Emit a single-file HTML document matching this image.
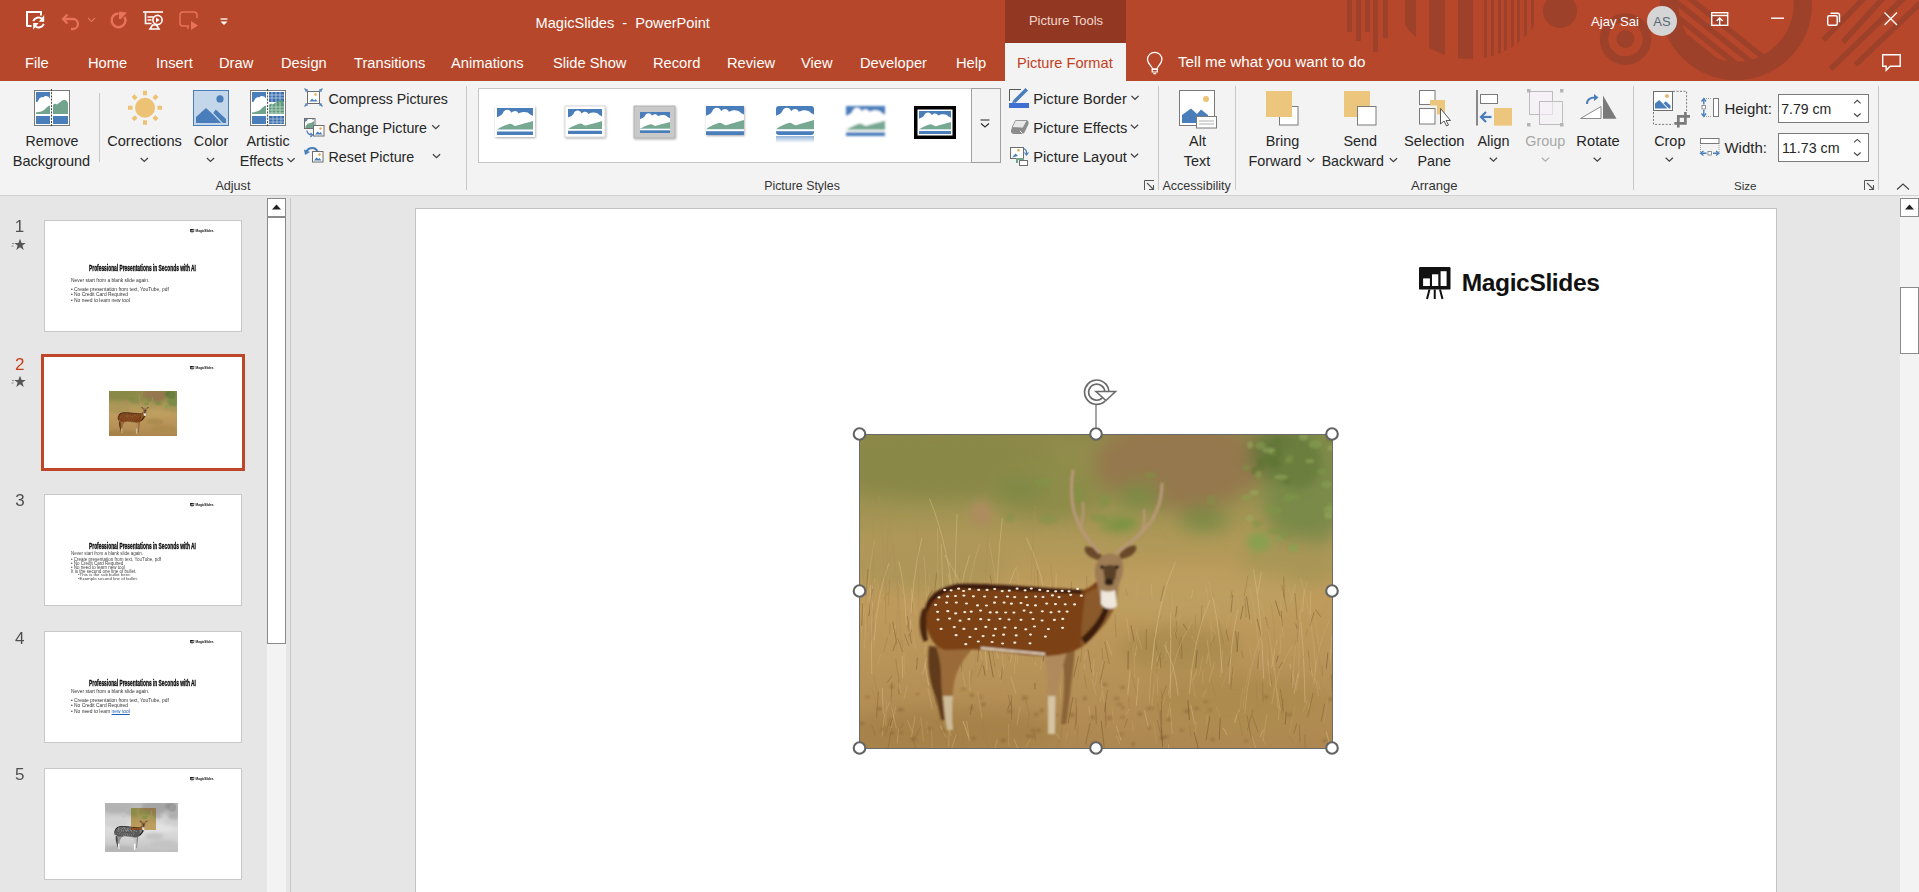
<!DOCTYPE html>
<html><head><meta charset="utf-8"><style>*{margin:0;padding:0;box-sizing:border-box}
html,body{width:1919px;height:892px;overflow:hidden;background:#e6e6e6;font-family:"Liberation Sans",sans-serif;color:#262626}
.a{position:absolute}
.t{line-height:1;white-space:nowrap}
</style></head><body>
<div class="a" style="left:0;top:0;width:1919px;height:81px;background:#b7472a;overflow:hidden">

<svg class="a" style="left:0;top:0" width="1919" height="81">
<g fill="#9d412b">
<rect x="1347" y="0" width="5" height="32"/>
<rect x="1356" y="0" width="5" height="41"/>
<rect x="1365" y="0" width="5" height="32"/>
<rect x="1373" y="0" width="5" height="52"/>
<rect x="1383" y="0" width="5" height="38"/>
<clipPath id="c1"><circle cx="1470" cy="-20" r="79"/></clipPath>
<g clip-path="url(#c1)">
<rect x="1405" y="0" width="11" height="81"/>
<rect x="1429" y="0" width="16" height="81"/>
<rect x="1458" y="0" width="15" height="81"/>
<rect x="1484" y="0" width="3" height="81"/>
<rect x="1491" y="0" width="3" height="81"/>
<rect x="1498" y="0" width="3" height="81"/>
<rect x="1504" y="0" width="3" height="81"/>
<rect x="1511" y="0" width="3" height="81"/>
<rect x="1517" y="0" width="3" height="81"/>
<rect x="1524" y="0" width="3" height="81"/>
<rect x="1531" y="0" width="3" height="81"/>
</g>
<circle cx="1560" cy="11" r="17"/>
<circle cx="1625.5" cy="39" r="21.5" fill="none" stroke="#9d412b" stroke-width="8.5"/>
<circle cx="1625.5" cy="39" r="9"/>
<circle cx="1736" cy="4" r="66.8" fill="none" stroke="#9d412b" stroke-width="18.4"/>
<clipPath id="c2"><circle cx="1736" cy="4" r="58"/></clipPath>
<g clip-path="url(#c2)" stroke="#9d412b" stroke-width="5.5">
<line x1="1640" y1="-41.2" x2="1810" y2="94.8"/><line x1="1640" y1="-27.0" x2="1810" y2="109.0"/><line x1="1640" y1="-13.0" x2="1810" y2="123.0"/><line x1="1640" y1="0.0" x2="1810" y2="136.0"/>
</g>
<g stroke="#9d412b" stroke-width="5.5">
<line x1="1823.5" y1="39.9" x2="1870" y2="-8.0"/><line x1="1843" y1="42.2" x2="1890" y2="-9.5"/><line x1="1830.4" y1="69.3" x2="1930" y2="-27.3"/><line x1="1855.5" y1="64.7" x2="1930" y2="-6.1"/>
</g>
</g>
</svg>
<svg class="a" style="left:0;top:0" width="240" height="43">
<path d="M27 26.5V12H41V15.5M27 26H31.5" fill="none" stroke="#fff" stroke-width="2"/>
<g fill="none" stroke="#fff" stroke-width="1.9">
<path d="M33.2 21.2A5.6 5.6 0 0 1 42.2 19"/><path d="M43.8 23.8A5.6 5.6 0 0 1 34.8 26"/>
</g>
<path d="M44.2 15V21.8H38.8z M33.2 29.8V23H38.6z" fill="#fff"/>
<g fill="none" stroke="#e8725a" stroke-width="2.3">
<path d="M63 19h10a5 5 0 0 1 0 10h-2"/><path d="M67.5 14.5L63 19l4.5 4.5"/>
</g>
<path d="M88 18l3.5 3.5L95 18" fill="none" stroke="#e8725a" stroke-width="1.2"/>
<path d="M118.5 13.4A6.9 6.9 0 1 0 124.5 16.8" fill="none" stroke="#e8725a" stroke-width="2.5"/>
<path d="M119.2 11.6L127 12.6L121.3 18.6z M119 12.5H121.5V19H119z" fill="#e8725a"/>
<g fill="none" stroke="#fff" stroke-width="1.6">
<path d="M143 12h20"/><path d="M145.5 12.5v11h6"/><path d="M147.5 17h6M147.5 20h4"/>
<circle cx="157.5" cy="20" r="4.6"/><path d="M150 29l2.5-4h4l2.5 4z"/>
</g>
<path d="M156 17.5v5l3.5-2.5z" fill="#fff"/>
<g fill="none" stroke="#e8725a" stroke-width="1.5">
<path d="M189 26h-6a3 3 0 0 1-3-3v-8a3 3 0 0 1 3-3h11a3 3 0 0 1 3 3v3"/><path d="M188 26v3"/>
</g>
<path d="M191 21v9l7-4.5z" fill="#e8725a"/>
<path d="M220.5 19h7" stroke="#fff" stroke-width="1.3"/>
<path d="M220.5 21.5h7l-3.5 3.5z" fill="#fff"/>
</svg>
<svg class="a" style="left:1700px;top:0" width="219" height="81">
<g fill="none" stroke="#fff" stroke-width="1.4">
<rect x="11.7" y="12.7" width="16" height="12.6"/>
<path d="M12 15.5h15.5"/><path d="M19.7 25v-7M16.7 21l3-3 3 3"/>
<path d="M71 18.2h13"/>
<rect x="127.7" y="15.7" width="9.5" height="9.5" rx="1.5"/><path d="M130.5 13.3h7a2 2 0 0 1 2 2v7"/>
<path d="M184.5 12.5l12.5 12.5M197 12.5l-12.5 12.5"/>
<path d="M182.7 54.7h17.5v11.5h-10l-4 4v-4h-3.5z"/>
</g>
</svg>
<svg class="a" style="left:1140.5px;top:45px" width="30" height="38">
<path d="M11.5 24C11.5 21.5 6.5 19 6.5 14.5A7.2 7.2 0 0 1 20.9 14.5C20.9 19 16 21.5 16 24z" fill="none" stroke="#fff" stroke-width="1.3"/>
<path d="M11.2 24.5H16.3V27H11.2z" fill="none" stroke="#fff" stroke-width="1.2"/>
<path d="M12.3 28.6H15.2" stroke="#fff" stroke-width="1.3"/>
</svg>

<div class="a" style="left:1005px;top:0;width:121px;height:43px;background:#923822"></div>
<div class="a" style="left:1005px;top:43px;width:121px;height:38px;background:#f3f3f3"></div>
<div class="a t" style="left:916.00px;top:14px;width:300px;text-align:center;font-size:13px;color:#f1d5cc;">Picture Tools</div>
<div class="a t" style="left:535.50px;top:16px;font-size:14.6px;color:#fff;">MagicSlides&nbsp; -&nbsp; PowerPoint</div>
<div class="a t" style="left:25.00px;top:56px;font-size:14.7px;color:#fff;">File</div>
<div class="a t" style="left:88.00px;top:56px;font-size:14.7px;color:#fff;">Home</div>
<div class="a t" style="left:156.00px;top:56px;font-size:14.7px;color:#fff;">Insert</div>
<div class="a t" style="left:219.00px;top:56px;font-size:14.7px;color:#fff;">Draw</div>
<div class="a t" style="left:281.00px;top:56px;font-size:14.7px;color:#fff;">Design</div>
<div class="a t" style="left:354.00px;top:56px;font-size:14.7px;color:#fff;">Transitions</div>
<div class="a t" style="left:451.00px;top:56px;font-size:14.7px;color:#fff;">Animations</div>
<div class="a t" style="left:553.00px;top:56px;font-size:14.7px;color:#fff;">Slide Show</div>
<div class="a t" style="left:653.00px;top:56px;font-size:14.7px;color:#fff;">Record</div>
<div class="a t" style="left:727.00px;top:56px;font-size:14.7px;color:#fff;">Review</div>
<div class="a t" style="left:801.00px;top:56px;font-size:14.7px;color:#fff;">View</div>
<div class="a t" style="left:860.00px;top:56px;font-size:14.7px;color:#fff;">Developer</div>
<div class="a t" style="left:956.00px;top:56px;font-size:14.7px;color:#fff;">Help</div>
<div class="a t" style="left:1017.00px;top:56px;font-size:14.6px;color:#c43e1c;">Picture Format</div>
<div class="a t" style="left:1178.00px;top:54px;font-size:15.2px;color:#fff;">Tell me what you want to do</div>
<div class="a t" style="left:1591.00px;top:15px;font-size:13.1px;color:#fff;">Ajay Sai</div>
<div class="a" style="left:1647px;top:6px;width:30px;height:30px;border-radius:50%;background:#d5d5d5"></div>
<div class="a t" style="left:1512.00px;top:15px;width:300px;text-align:center;font-size:13px;color:#5b6675;">AS</div>
</div>
<div class="a" style="left:0;top:81px;width:1919px;height:114px;background:#f3f3f3"></div>
<div class="a" style="left:0;top:195px;width:1919px;height:1px;background:#d2d2d2"></div>
<div class="a t" style="left:-98.00px;top:134px;width:300px;text-align:center;font-size:14.2px;color:#262626;">Remove</div>
<div class="a t" style="left:-98.50px;top:154px;width:300px;text-align:center;font-size:14.5px;color:#262626;">Background</div>
<div class="a t" style="left:-5.50px;top:134px;width:300px;text-align:center;font-size:14.6px;color:#262626;">Corrections</div>
<div class="a t" style="left:61.00px;top:134px;width:300px;text-align:center;font-size:14.4px;color:#262626;">Color</div>
<div class="a t" style="left:118.00px;top:134px;width:300px;text-align:center;font-size:14.4px;color:#262626;">Artistic</div>
<div class="a t" style="left:111.50px;top:154px;width:300px;text-align:center;font-size:14.4px;color:#262626;">Effects</div>
<div class="a t" style="left:328.50px;top:92px;font-size:14.15px;color:#262626;">Compress Pictures</div>
<div class="a t" style="left:328.50px;top:121px;font-size:14.3px;color:#262626;">Change Picture</div>
<div class="a t" style="left:328.50px;top:150px;font-size:14.3px;color:#262626;">Reset Picture</div>
<div class="a t" style="left:1033.30px;top:92px;font-size:14.65px;color:#262626;">Picture Border</div>
<div class="a t" style="left:1033.30px;top:121px;font-size:14.65px;color:#262626;">Picture Effects</div>
<div class="a t" style="left:1033.30px;top:150px;font-size:14.65px;color:#262626;">Picture Layout</div>
<div class="a t" style="left:1047.50px;top:134px;width:300px;text-align:center;font-size:14.4px;color:#262626;">Alt</div>
<div class="a t" style="left:1047.00px;top:154px;width:300px;text-align:center;font-size:14.4px;color:#262626;">Text</div>
<div class="a t" style="left:1132.50px;top:134px;width:300px;text-align:center;font-size:14.4px;color:#262626;">Bring</div>
<div class="a t" style="left:1124.80px;top:154px;width:300px;text-align:center;font-size:14.4px;color:#262626;">Forward</div>
<div class="a t" style="left:1210.20px;top:134px;width:300px;text-align:center;font-size:14.4px;color:#262626;">Send</div>
<div class="a t" style="left:1202.80px;top:154px;width:300px;text-align:center;font-size:14.2px;color:#262626;">Backward</div>
<div class="a t" style="left:1284.30px;top:134px;width:300px;text-align:center;font-size:14.7px;color:#262626;">Selection</div>
<div class="a t" style="left:1284.30px;top:154px;width:300px;text-align:center;font-size:14.4px;color:#262626;">Pane</div>
<div class="a t" style="left:1343.50px;top:134px;width:300px;text-align:center;font-size:14.4px;color:#262626;">Align</div>
<div class="a t" style="left:1395.30px;top:134px;width:300px;text-align:center;font-size:14.4px;color:#a8a8a8;">Group</div>
<div class="a t" style="left:1448.00px;top:134px;width:300px;text-align:center;font-size:14.7px;color:#262626;">Rotate</div>
<div class="a t" style="left:1519.80px;top:134px;width:300px;text-align:center;font-size:14.4px;color:#262626;">Crop</div>
<div class="a t" style="left:1724.40px;top:101px;font-size:15px;color:#262626;">Height:</div>
<div class="a t" style="left:1724.40px;top:140px;font-size:15px;color:#262626;">Width:</div>
<div class="a t" style="left:82.90px;top:180px;width:300px;text-align:center;font-size:12.6px;color:#333;">Adjust</div>
<div class="a t" style="left:652.00px;top:180px;width:300px;text-align:center;font-size:12.4px;color:#333;">Picture Styles</div>
<div class="a t" style="left:1046.60px;top:180px;width:300px;text-align:center;font-size:12.55px;color:#333;">Accessibility</div>
<div class="a t" style="left:1284.30px;top:179px;width:300px;text-align:center;font-size:13.1px;color:#333;">Arrange</div>
<div class="a t" style="left:1595.20px;top:180px;width:300px;text-align:center;font-size:11.6px;color:#333;">Size</div>
<div class="a" style="left:1778px;top:94px;width:91px;height:29px;background:#fff;border:1px solid #7a7a7a"></div>
<div class="a" style="left:1778px;top:133px;width:91px;height:29px;background:#fff;border:1px solid #7a7a7a"></div>
<div class="a t" style="left:1781.30px;top:102px;font-size:14.05px;color:#262626;">7.79 cm</div>
<div class="a t" style="left:1782.00px;top:141px;font-size:14.25px;color:#262626;">11.73 cm</div>
<svg class="a" style="left:0;top:0" width="1919" height="200"><defs>
<filter id="sh" x="-20%" y="-20%" width="150%" height="150%"><feDropShadow dx="0.6" dy="1" stdDeviation="0.8" flood-color="#000" flood-opacity=".35"/></filter>
<filter id="soft" x="-20%" y="-20%" width="140%" height="140%"><feGaussianBlur stdDeviation="1.1"/></filter>
<clipPath id="rr5"><rect x="776" y="106" width="38" height="29" rx="3"/></clipPath>
<linearGradient id="refl" x1="0" y1="0" x2="0" y2="1"><stop offset="0" stop-color="#8fb1d8"/><stop offset="1" stop-color="#fff"/></linearGradient>
</defs><path d="M99.5 93V162" stroke="#c8c8c8" stroke-width="1"/><path d="M466.5 86V190" stroke="#c8c8c8" stroke-width="1"/><path d="M1158.5 86V190" stroke="#c8c8c8" stroke-width="1"/><path d="M1235.5 86V190" stroke="#c8c8c8" stroke-width="1"/><path d="M1633.5 86V190" stroke="#c8c8c8" stroke-width="1"/><path d="M1878.5 86V190" stroke="#c8c8c8" stroke-width="1"/><path d="M140.70000000000002 158.0L144.3 161.39999999999998L147.9 158.0" fill="none" stroke="#444" stroke-width="1.3"/><path d="M206.9 158.0L210.5 161.39999999999998L214.1 158.0" fill="none" stroke="#444" stroke-width="1.3"/><path d="M287.4 158.3L291 161.7L294.6 158.3" fill="none" stroke="#444" stroke-width="1.3"/><path d="M432.2 125.3L435.8 128.7L439.40000000000003 125.3" fill="none" stroke="#444" stroke-width="1.3"/><path d="M432.9 154.3L436.5 157.7L440.1 154.3" fill="none" stroke="#444" stroke-width="1.3"/><path d="M1131.4 95.89999999999999L1135 99.3L1138.6 95.89999999999999" fill="none" stroke="#444" stroke-width="1.3"/><path d="M1130.9 124.8L1134.5 128.2L1138.1 124.8" fill="none" stroke="#444" stroke-width="1.3"/><path d="M1130.9 153.8L1134.5 157.2L1138.1 153.8" fill="none" stroke="#444" stroke-width="1.3"/><path d="M1307.1000000000001 158.3L1310.7 161.7L1314.3 158.3" fill="none" stroke="#444" stroke-width="1.3"/><path d="M1389.8000000000002 158.3L1393.4 161.7L1397.0 158.3" fill="none" stroke="#444" stroke-width="1.3"/><path d="M1489.8000000000002 157.70000000000002L1493.4 161.1L1497.0 157.70000000000002" fill="none" stroke="#444" stroke-width="1.3"/><path d="M1541.8000000000002 157.70000000000002L1545.4 161.1L1549.0 157.70000000000002" fill="none" stroke="#b0b0b0" stroke-width="1.3"/><path d="M1593.7 157.70000000000002L1597.3 161.1L1600.8999999999999 157.70000000000002" fill="none" stroke="#444" stroke-width="1.3"/><path d="M1665.7 157.70000000000002L1669.3 161.1L1672.8999999999999 157.70000000000002" fill="none" stroke="#444" stroke-width="1.3"/><path d="M1854 103.3L1857.3 100.3L1860.6 103.3" fill="none" stroke="#444" stroke-width="1.1"/><path d="M1854 113.5L1857.3 116.5L1860.6 113.5" fill="none" stroke="#444" stroke-width="1.1"/><path d="M1854 142.4L1857.3 139.4L1860.6 142.4" fill="none" stroke="#444" stroke-width="1.1"/><path d="M1854 152.5L1857.3 155.5L1860.6 152.5" fill="none" stroke="#444" stroke-width="1.1"/><path d="M1144.5 190V180.5H1154" fill="none" stroke="#555" stroke-width="1"/><path d="M1147 183L1153.5 189.5M1153.5 185V189.5H1149" fill="none" stroke="#555" stroke-width="1.1"/><path d="M1864.5 190V180.5H1874" fill="none" stroke="#555" stroke-width="1"/><path d="M1867 183L1873.5 189.5M1873.5 185V189.5H1869" fill="none" stroke="#555" stroke-width="1.1"/><path d="M1897 189.5L1903 184L1909 189.5" fill="none" stroke="#444" stroke-width="1.2"/><rect x="34.5" y="90.5" width="35" height="35" fill="#fff" stroke="#7a7a7a"/>
<rect x="36" y="92" width="14" height="10" fill="#4a7ebb"/>
<path d="M36 102.5c1.5-.5 2.5-2 3-3.5 1-1.5 2.5-2 4-1.5 1-1.5 3-2 5-1 1 .5 2 1.5 2 3V92v16H36z" fill="#fff"/>
<path d="M36 114V112.5c3 -.5 6-1 8-2.5 2-1.5 3-4 6-4.5V114z" fill="#72a48d"/>
<rect x="36" y="116" width="14" height="8" fill="#4a7ebb"/>
<path d="M53 114V105c1.5-2 3-1.5 4-.5 1.5-1.5 3-2 4-3 2-2 5-2 6.5 0.5 .5 1 .5 2 .5 3V114z" fill="#72a48d"/>
<rect x="53" y="116" width="15" height="8" fill="#4a7ebb"/>
<path d="M51.5 89V127" stroke="#444" stroke-width="1" stroke-dasharray="2 1.2"/><circle cx="145" cy="107.7" r="10" fill="#edc275"/><path d="M145.00 95.20L145.00 90.70M153.84 98.86L157.02 95.68M157.50 107.70L162.00 107.70M153.84 116.54L157.02 119.72M145.00 120.20L145.00 124.70M136.16 116.54L132.98 119.72M132.50 107.70L128.00 107.70M136.16 98.86L132.98 95.68" stroke="#edc275" stroke-width="4"/><rect x="193.5" y="90.5" width="35" height="35" fill="#c4d6ea" stroke="#4a7ebb"/>
<circle cx="220" cy="98.9" r="3.6" fill="#4a7ebb"/>
<path d="M196 123V117L206 108L212.5 114L215.8 109.5L226 119V123z" fill="#4a7ebb"/>
<path d="M212.5 113L222.5 123.5" stroke="#c4d6ea" stroke-width="1.2"/><rect x="250.5" y="90.5" width="35" height="35" fill="#fff" stroke="#7a7a7a"/>
<rect x="252" y="92" width="14" height="10" fill="#4a7ebb"/>
<path d="M252 102.5c1.5-.5 2.5-2 3-3.5 1-1.5 2.5-2 4-1.5 1-1.5 3-2 5-1 1 .5 2 1.5 2 3V92v16H252z" fill="#fff"/>
<path d="M252 114V112.5c3 -.5 6-1 8-2.5 2-1.5 3-4 6-4.5V114z" fill="#72a48d"/>
<rect x="252" y="116" width="14" height="8" fill="#4a7ebb"/>
<rect x="269" y="92" width="15" height="10" fill="#3d6fae"/>
<path d="M269 95h15M269 98h15M272 92v10M276 92v10M280 92v10" stroke="#bcd0e6" stroke-width=".8"/>
<path d="M269 114V105c1.5-2 3-1.5 4-.5 1.5-1.5 3-2 4-3 2-2 5-2 6.5 0.5 .5 1 .5 2 .5 3V114z" fill="#5f9a7e"/>
<path d="M269 107h15M269 110h15M269 113h15M272 103v11M276 102v12M280 102v12" stroke="#cfe3d6" stroke-width=".7"/>
<rect x="269" y="116" width="15" height="8" fill="#3d6fae"/>
<path d="M269 119h15M269 122h15M273 116v8M277 116v8M281 116v8" stroke="#bcd0e6" stroke-width=".7"/>
<path d="M267.6 89V127" stroke="#444" stroke-width="1" stroke-dasharray="2 1.2"/><rect x="307.5" y="91.5" width="12" height="12" fill="#fff" stroke="#6d6d6d"/>
<circle cx="315.5" cy="94.5" r="1.3" fill="#e9a84c"/>
<path d="M309.5 101.5L312 98.5L314 100.5L315.5 99L317.5 101.5z" fill="#4a7ebb"/>
<g stroke="#4a7ebb" stroke-width="1.1" fill="none"><path d="M304.5 88.5L307 91M304.5 106.5L307 104M322.5 88.5L320 91M322.5 106.5L320 104"/>
<path d="M305 91h2v-2M305 104h2v2M322 91h-2v-2M322 104h-2v2"/></g><rect x="304.5" y="118.5" width="10.5" height="10" fill="#fff" stroke="#6d6d6d"/>
<path d="M305.5 126L308 123.5L311 123L314 121V128h-8.5z" fill="#72a48d"/>
<path d="M305.5 121.5V119.5h2M313.5 119.5h-1" stroke="#4a7ebb" stroke-width="1"/>
<rect x="313.5" y="125.5" width="10.5" height="10.5" fill="#fff" stroke="#6d6d6d"/>
<circle cx="320.5" cy="128.5" r="1.2" fill="#e9a84c"/>
<path d="M315 134.5L317.5 131.5L319.5 133L320.5 132L322.5 134.5z" fill="#4a7ebb"/>
<path d="M307 130.5c0 3 2 4 4.5 4.5" fill="none" stroke="#4a7ebb" stroke-width="1.3"/><path d="M310.5 133L312.5 135L310.5 137" fill="none" stroke="#4a7ebb" stroke-width="1.2"/><rect x="312.5" y="151.5" width="10.5" height="10.5" fill="#fff" stroke="#6d6d6d"/>
<circle cx="319.5" cy="154.5" r="1.3" fill="#e9a84c"/>
<path d="M314 160.5L316.5 157.5L318.5 159L319.5 158L321.5 160.5z" fill="#4a7ebb"/>
<path d="M306 152.5c1-3 3.5-4.5 6.5-4.5 2.5 0 4 1.5 5 3" fill="none" stroke="#4a7ebb" stroke-width="2"/>
<path d="M304 149.5L305 155L310 152z" fill="#4a7ebb"/><rect x="478.5" y="88.5" width="493" height="74" fill="#fff" stroke="#c6c6c6"/><rect x="971.5" y="88.5" width="29" height="74" fill="#f3f3f3" stroke="#a0a0a0"/><path d="M980.5 120H989.5" stroke="#333" stroke-width="1.1"/><path d="M981 123.5L985 127L989 123.5" fill="none" stroke="#333" stroke-width="1.3"/><rect x="495" y="106" width="40" height="31" fill="#fff" filter="url(#sh)"/><rect x="497" y="108" width="36" height="27" fill="#4a7ebb"/><path d="M497.00 117.18C499.16 116.10 501.32 115.56 502.76 113.40C504.20 108.54 509.96 108.54 511.40 112.86C513.56 110.16 517.16 110.16 518.60 113.40C522.20 111.24 527.96 111.24 530.12 114.48C531.56 115.02 532.28 115.56 533.00 116.10V129.60H497.00z" fill="#fff"/><path d="M497.00 129.60C500.60 126.90 506.00 124.74 509.96 123.66C512.12 123.66 514.28 126.36 516.08 125.82C522.20 123.66 527.60 122.85 533.00 120.96V129.60z" fill="#76a892"/><rect x="497" y="129.60" width="36" height="1.89" fill="#fff"/><rect x="565" y="106" width="40" height="31" fill="#fff" stroke="#d0d0d0" stroke-width=".8" filter="url(#sh)"/><rect x="568" y="109" width="34" height="25" fill="#4a7ebb"/><path d="M568.00 117.50C570.04 116.50 572.08 116.00 573.44 114.00C574.80 109.50 580.24 109.50 581.60 113.50C583.64 111.00 587.04 111.00 588.40 114.00C591.80 112.00 597.24 112.00 599.28 115.00C600.64 115.50 601.32 116.00 602.00 116.50V129.00H568.00z" fill="#fff"/><path d="M568.00 129.00C571.40 126.50 576.50 124.50 580.24 123.50C582.28 123.50 584.32 126.00 586.02 125.50C591.80 123.50 596.90 122.75 602.00 121.00V129.00z" fill="#76a892"/><rect x="568" y="129.00" width="34" height="1.75" fill="#fff"/><rect x="634" y="106" width="41" height="32" fill="#c9c9c9" stroke="#aaa" stroke-width=".8" filter="url(#sh)"/><rect x="640" y="112" width="30" height="21" fill="#4a7ebb"/><path d="M640.00 119.14C641.80 118.30 643.60 117.88 644.80 116.20C646.00 112.42 650.80 112.42 652.00 115.78C653.80 113.68 656.80 113.68 658.00 116.20C661.00 114.52 665.80 114.52 667.60 117.04C668.80 117.46 669.40 117.88 670.00 118.30V128.80H640.00z" fill="#fff"/><path d="M640.00 128.80C643.00 126.70 647.50 125.02 650.80 124.18C652.60 124.18 654.40 126.28 655.90 125.86C661.00 124.18 665.50 123.55 670.00 122.08V128.80z" fill="#76a892"/><rect x="640" y="128.80" width="30" height="1.47" fill="#fff"/><g filter="url(#sh)"><rect x="706" y="106" width="38" height="29" fill="#4a7ebb"/><path d="M706.00 115.86C708.28 114.70 710.56 114.12 712.08 111.80C713.60 106.58 719.68 106.58 721.20 111.22C723.48 108.32 727.28 108.32 728.80 111.80C732.60 109.48 738.68 109.48 740.96 112.96C742.48 113.54 743.24 114.12 744.00 114.70V129.20H706.00z" fill="#fff"/><path d="M706.00 129.20C709.80 126.30 715.50 123.98 719.68 122.82C721.96 122.82 724.24 125.72 726.14 125.14C732.60 122.82 738.30 121.95 744.00 119.92V129.20z" fill="#76a892"/><rect x="706" y="129.20" width="38" height="2.03" fill="#fff"/></g><g clip-path="url(#rr5)"><rect x="776" y="106" width="38" height="29" fill="#4a7ebb"/><path d="M776.00 115.86C778.28 114.70 780.56 114.12 782.08 111.80C783.60 106.58 789.68 106.58 791.20 111.22C793.48 108.32 797.28 108.32 798.80 111.80C802.60 109.48 808.68 109.48 810.96 112.96C812.48 113.54 813.24 114.12 814.00 114.70V129.20H776.00z" fill="#fff"/><path d="M776.00 129.20C779.80 126.30 785.50 123.98 789.68 122.82C791.96 122.82 794.24 125.72 796.14 125.14C802.60 122.82 808.30 121.95 814.00 119.92V129.20z" fill="#76a892"/><rect x="776" y="129.20" width="38" height="2.03" fill="#fff"/></g><rect x="776" y="136" width="38" height="7" fill="url(#refl)"/><g filter="url(#soft)"><rect x="846" y="106" width="39" height="30" fill="#4a7ebb"/><path d="M846.00 116.20C848.34 115.00 850.68 114.40 852.24 112.00C853.80 106.60 860.04 106.60 861.60 111.40C863.94 108.40 867.84 108.40 869.40 112.00C873.30 109.60 879.54 109.60 881.88 113.20C883.44 113.80 884.22 114.40 885.00 115.00V130.00H846.00z" fill="#fff"/><path d="M846.00 130.00C849.90 127.00 855.75 124.60 860.04 123.40C862.38 123.40 864.72 126.40 866.67 125.80C873.30 123.40 879.15 122.50 885.00 120.40V130.00z" fill="#76a892"/><rect x="846" y="130.00" width="39" height="2.10" fill="#fff"/></g><rect x="914" y="106" width="42" height="33" fill="#000"/><rect x="917.5" y="109.5" width="35" height="26" fill="#fff"/><rect x="919" y="111" width="32" height="23" fill="#4a7ebb"/><path d="M919.00 118.82C920.92 117.90 922.84 117.44 924.12 115.60C925.40 111.46 930.52 111.46 931.80 115.14C933.72 112.84 936.92 112.84 938.20 115.60C941.40 113.76 946.52 113.76 948.44 116.52C949.72 116.98 950.36 117.44 951.00 117.90V129.40H919.00z" fill="#fff"/><path d="M919.00 129.40C922.20 127.10 927.00 125.26 930.52 124.34C932.44 124.34 934.36 126.64 935.96 126.18C941.40 124.34 946.20 123.65 951.00 122.04V129.40z" fill="#76a892"/><rect x="919" y="129.40" width="32" height="1.61" fill="#fff"/><path d="M1009.5 101V89.5H1021" fill="none" stroke="#555" stroke-width="1"/>
<path d="M1013 100.5L1025.5 88L1028 90.5L1015.5 103z" fill="#4a7ebb"/>
<path d="M1013 100.5L1012 103.5L1015 102.5z" fill="#4a7ebb"/>
<rect x="1009" y="103" width="20" height="5" fill="#3f6fd1"/><path d="M1012 128L1016 120.5H1027.5C1028.5 121 1028.8 122.5 1028.5 124L1024.5 132.5C1023.5 134 1022.5 134 1021 134H1014C1011 134 1010 131 1012 128z" fill="#8c8c8c"/>
<path d="M1012 127.5L1015.5 120.5H1027L1023 128z" fill="#e8e8e8" stroke="#8c8c8c" stroke-width=".8"/>
<path d="M1020 131L1022.5 133.5" stroke="#fff" stroke-width="1"/><rect x="1010.5" y="147.5" width="13" height="11" fill="#fff" stroke="#6d6d6d"/>
<circle cx="1018.5" cy="150.3" r="1.3" fill="#e9a84c"/>
<path d="M1012 157.5L1015.5 153.5L1018 156z" fill="#4a7ebb"/>
<path d="M1016 158h8v2h-8z" fill="#72a48d"/><path d="M1017 160v3" stroke="#72a48d" stroke-width="2"/>
<rect x="1019.5" y="160.5" width="8" height="5" fill="#fff" stroke="#6d6d6d"/>
<path d="M1023.5 148.5c2.5 1 3.5 3 3 5.5" fill="none" stroke="#4a7ebb" stroke-width="1.3"/><path d="M1024.5 152.5L1026.5 155L1028.5 152.5" fill="none" stroke="#4a7ebb" stroke-width="1.2"/><rect x="1179.5" y="90.5" width="35" height="35" fill="#fff" stroke="#7a7a7a"/>
<circle cx="1206" cy="99" r="3" fill="#edc275"/>
<path d="M1182 123V115L1191 108.5L1197 114L1201 109.5L1208 115V123z" fill="#4a7ebb"/>
<rect x="1196.5" y="116.5" width="20" height="11.5" fill="#fff" stroke="#7a7a7a"/>
<path d="M1199 121H1214M1199 124H1214" stroke="#9a9a9a" stroke-width=".8"/><rect x="1279.5" y="106.5" width="18.5" height="18.5" fill="#fff" stroke="#7a7a7a"/>
<rect x="1266" y="91" width="26" height="26" fill="#edc67d"/><rect x="1344" y="91" width="26" height="26" fill="#edc67d"/>
<rect x="1357.5" y="106.5" width="18.5" height="18.5" fill="#fff" stroke="#7a7a7a"/><rect x="1419.5" y="90.5" width="15.5" height="14" fill="#fff" stroke="#7a7a7a"/>
<rect x="1419.5" y="108.5" width="15.5" height="15.5" fill="#fff" stroke="#7a7a7a"/>
<rect x="1430" y="100" width="15" height="5.5" fill="#edc67d"/>
<rect x="1437" y="100" width="8" height="14.5" fill="#edc67d"/>
<path d="M1440.5 108.5V124L1444 121L1446.5 126L1448.5 125L1446 120.5H1450.5z" fill="#fff" stroke="#555" stroke-width="1"/><path d="M1477 90V125.6" stroke="#6d6d6d" stroke-width="1.6"/>
<rect x="1480.5" y="94.5" width="17" height="9" fill="#fff" stroke="#7a7a7a"/>
<rect x="1494" y="108" width="18" height="17.6" fill="#edc67d"/>
<path d="M1491.5 117H1482" stroke="#4a7ebb" stroke-width="2.2"/><path d="M1486 112L1481 117L1486 122" fill="none" stroke="#4a7ebb" stroke-width="2.2"/><rect x="1529.5" y="91.5" width="23" height="23" fill="#f6f1f6" stroke="#bdbdbd" stroke-width="1"/>
<rect x="1539.5" y="101.5" width="23" height="23" fill="#f6f1f6" fill-opacity=".6" stroke="#bdbdbd" stroke-width="1"/>
<rect x="1527" y="89" width="3.5" height="3.5" fill="#b5b5b5"/><rect x="1560" y="89" width="3.5" height="3.5" fill="#b5b5b5"/>
<rect x="1527" y="123" width="3.5" height="3.5" fill="#b5b5b5"/><rect x="1560" y="123" width="3.5" height="3.5" fill="#b5b5b5"/><path d="M1580.5 118.5L1601 106.5V118.5z" fill="#fff" stroke="#8a8a8a" stroke-width="1"/>
<path d="M1603 95.5L1616.5 118.8H1603z" fill="#7a7a7a"/>
<path d="M1587 104c0-4 3-6.5 8-6.5" fill="none" stroke="#4a7ebb" stroke-width="2"/>
<path d="M1594 94L1598.5 97.5L1594 101z" fill="#4a7ebb"/><path d="M1673 91.3H1686.6V111M1653.5 112V124.4H1673" fill="none" stroke="#7a7a7a" stroke-dasharray="2 1.5"/>
<rect x="1653.5" y="91.5" width="19" height="19" fill="#fff" stroke="#6d6d6d"/>
<circle cx="1667" cy="95.9" r="2" fill="#e9b870"/>
<path d="M1655 108.6V103.5L1659.3 99.9L1667.5 108.6z" fill="#4a7ebb"/>
<path d="M1663.5 103.3L1665.8 101.2L1670.5 105.5V108.6H1668.8z" fill="#4a7ebb"/>
<path d="M1678.3 127.5V116.4H1690M1674.3 123.4H1685.4V112" fill="none" stroke="#7a7a7a" stroke-width="2.7"/><rect x="1713.5" y="98.5" width="5" height="18" fill="#fff" stroke="#7a7a7a"/>
<path d="M1704 98.5H1712M1704 116.5H1712" stroke="#888" stroke-width=".8" stroke-dasharray="1 1"/>
<rect x="1702" y="105.5" width="3.5" height="3.5" fill="#fff" stroke="#7a7a7a" stroke-width=".8"/>
<path d="M1703.8 99V104.5M1703.8 110V116" stroke="#4a7ebb" stroke-width="1.4"/>
<path d="M1701.5 101.5L1703.8 98.5L1706 101.5M1701.5 113.5L1703.8 116.5L1706 113.5" fill="none" stroke="#4a7ebb" stroke-width="1.3"/><rect x="1700.5" y="138.5" width="18.5" height="5" fill="#fff" stroke="#7a7a7a"/>
<path d="M1700.5 145V152M1719 145V152" stroke="#888" stroke-width=".8" stroke-dasharray="1 1"/>
<rect x="1708" y="151.5" width="3.5" height="3.5" fill="#fff" stroke="#7a7a7a" stroke-width=".8"/>
<path d="M1701 153.3H1706.5M1713 153.3H1718.5" stroke="#4a7ebb" stroke-width="1.4"/>
<path d="M1703.5 151L1700.5 153.3L1703.5 155.5M1716 151L1719 153.3L1716 155.5" fill="none" stroke="#4a7ebb" stroke-width="1.3"/></svg>
<div class="a" style="left:0;top:196px;width:290px;height:696px;background:#e6e6e6"></div>
<div class="a" style="left:290px;top:198px;width:1px;height:694px;background:#c8c8c8"></div>
<div class="a" style="left:267px;top:217px;width:19px;height:675px;background:#f3f3f3"></div>
<div class="a" style="left:267px;top:198px;width:19px;height:19px;background:#fff;border:1px solid #8a8a8a"></div>
<div class="a" style="left:267px;top:216px;width:19px;height:428px;background:#fff;border:1px solid #8a8a8a;border-top:2px solid #8a8a8a"></div>
<svg class="a" style="left:267px;top:198px" width="19" height="19"><path d="M5 11.5H14L9.5 6.5z" fill="#222"/></svg>
<div class="a" style="left:1900px;top:196px;width:19px;height:696px;background:#f3f3f3"></div>
<div class="a" style="left:1900px;top:198px;width:19px;height:19px;background:#fff;border:1px solid #8a8a8a"></div>
<svg class="a" style="left:1900px;top:198px" width="19" height="19"><path d="M5 11.5H14L9.5 6.5z" fill="#222"/></svg>
<div class="a" style="left:1900px;top:287px;width:19px;height:67px;background:#fff;border:1px solid #8a8a8a"></div>
<div class="a" style="left:415px;top:208px;width:1362px;height:700px;background:#fff;border:1px solid #c2c2c2"></div>
<svg class="a" style="left:1419.4px;top:267px" width="200.00" height="40.00" viewBox="0 0 200 40"><rect x="0" y="0" width="31.5" height="22.6" rx="1.2" fill="#111"/><rect x="4.1" y="11.4" width="6.8" height="7.6" fill="#fff"/><rect x="13" y="7.3" width="6.3" height="11.7" fill="#fff"/><rect x="21.6" y="4.2" width="6" height="14.8" fill="#fff"/><path d="M10.5 22.5L8 32M15.75 22.5V32M21 22.5L23.5 32" stroke="#111" stroke-width="2"/><text x="42.7" y="24.3" font-family="Liberation Sans" font-weight="bold" font-size="24.6" letter-spacing="-0.4" fill="#111">MagicSlides</text></svg>
<svg class="a" style="left:859px;top:434px" width="474" height="315" viewBox="0 0 474 315"><defs>
<linearGradient id="dbg" x1="0" y1="0" x2="0" y2="1">
<stop offset="0" stop-color="#8e8a4a"/><stop offset="0.2" stop-color="#9a9150"/><stop offset="0.33" stop-color="#ae9858"/>
<stop offset="0.5" stop-color="#c09c5c"/><stop offset="0.7" stop-color="#ba955a"/><stop offset="1" stop-color="#ad8750"/></linearGradient>
<filter id="db8" x="-50%" y="-50%" width="200%" height="200%"><feGaussianBlur stdDeviation="9"/></filter>
<filter id="db4" x="-50%" y="-50%" width="200%" height="200%"><feGaussianBlur stdDeviation="4"/></filter>
<filter id="db1" x="-20%" y="-20%" width="140%" height="140%"><feGaussianBlur stdDeviation="0.8"/></filter>
<clipPath id="dclip"><rect x="0" y="0" width="474" height="315"/></clipPath>
</defs><g clip-path="url(#dclip)"><rect x="0" y="0" width="474" height="315" fill="url(#dbg)"/><g filter="url(#db8)"><ellipse cx="80" cy="30" rx="120" ry="35" fill="#8a8846"/><ellipse cx="190" cy="55" rx="60" ry="30" fill="#8e8c4a"/><ellipse cx="320" cy="30" rx="85" ry="45" fill="#95784e"/><ellipse cx="445" cy="55" rx="40" ry="65" fill="#7a8a48"/><ellipse cx="420" cy="20" rx="30" ry="25" fill="#62773a"/><ellipse cx="345" cy="85" rx="25" ry="12" fill="#7b8a44"/><ellipse cx="280" cy="62" rx="22" ry="14" fill="#7d8a44"/><ellipse cx="160" cy="55" rx="25" ry="12" fill="#7e8944"/><ellipse cx="430" cy="130" rx="50" ry="25" fill="#a99656"/><ellipse cx="70" cy="130" rx="80" ry="30" fill="#ad9659"/><ellipse cx="330" cy="160" rx="120" ry="25" fill="#bd9f60"/><ellipse cx="90" cy="300" rx="110" ry="25" fill="#a6824a"/><ellipse cx="380" cy="270" rx="90" ry="30" fill="#ad8b4f"/><ellipse cx="320" cy="215" rx="60" ry="22" fill="#ab8c50"/></g><g filter="url(#db4)"><ellipse cx="122" cy="80" rx="11" ry="13" fill="#ad8c5e"/><ellipse cx="400" cy="108" rx="12" ry="10" fill="#86a050"/><ellipse cx="440" cy="30" rx="22" ry="25" fill="#6c7e3c"/><ellipse cx="260" cy="90" rx="20" ry="10" fill="#889448"/></g><g filter="url(#db1)"><ellipse cx="413.8" cy="18.1" rx="3.3" ry="3.6" fill="#8aa452" opacity="0.5"/><ellipse cx="417.5" cy="7.0" rx="3.1" ry="3.3" fill="#5d7632" opacity="0.5"/><ellipse cx="391.2" cy="10.9" rx="3.2" ry="3.7" fill="#9aae60" opacity="0.5"/><ellipse cx="469.3" cy="75.7" rx="5.3" ry="3.2" fill="#8aa452" opacity="0.5"/><ellipse cx="471.9" cy="5.6" rx="4.2" ry="2.4" fill="#5d7632" opacity="0.5"/><ellipse cx="395.5" cy="37.0" rx="3.4" ry="3.7" fill="#5d7632" opacity="0.5"/><ellipse cx="401.7" cy="11.7" rx="5.3" ry="3.9" fill="#8aa452" opacity="0.5"/><ellipse cx="429.2" cy="63.8" rx="4.9" ry="4.8" fill="#7d9548" opacity="0.5"/><ellipse cx="417.2" cy="29.8" rx="5.8" ry="2.7" fill="#5d7632" opacity="0.5"/><ellipse cx="436.1" cy="63.0" rx="5.9" ry="2.9" fill="#7d9548" opacity="0.5"/><ellipse cx="472.2" cy="14.2" rx="3.7" ry="3.0" fill="#9aae60" opacity="0.5"/><ellipse cx="468.1" cy="50.6" rx="6.1" ry="3.7" fill="#8aa452" opacity="0.5"/><ellipse cx="462.9" cy="37.6" rx="5.4" ry="3.7" fill="#7d9548" opacity="0.5"/><ellipse cx="425.6" cy="100.8" rx="4.9" ry="4.0" fill="#7d9548" opacity="0.5"/><ellipse cx="390.4" cy="84.2" rx="4.1" ry="3.2" fill="#9aae60" opacity="0.5"/><ellipse cx="444.5" cy="2.7" rx="4.4" ry="3.8" fill="#9aae60" opacity="0.5"/><ellipse cx="428.9" cy="26.2" rx="3.5" ry="2.7" fill="#7d9548" opacity="0.5"/><ellipse cx="419.8" cy="104.6" rx="3.7" ry="3.2" fill="#8aa452" opacity="0.5"/><ellipse cx="409.7" cy="16.4" rx="6.5" ry="2.8" fill="#9aae60" opacity="0.5"/><ellipse cx="422.0" cy="43.1" rx="6.8" ry="2.5" fill="#9aae60" opacity="0.5"/><ellipse cx="400.7" cy="27.8" rx="3.0" ry="4.5" fill="#5d7632" opacity="0.5"/><ellipse cx="401.2" cy="33.8" rx="4.7" ry="3.1" fill="#5d7632" opacity="0.5"/><ellipse cx="435.4" cy="114.4" rx="4.8" ry="4.6" fill="#8aa452" opacity="0.5"/><ellipse cx="469.7" cy="81.7" rx="4.6" ry="3.2" fill="#9aae60" opacity="0.5"/><ellipse cx="427.9" cy="48.1" rx="3.3" ry="2.6" fill="#5d7632" opacity="0.5"/><ellipse cx="399.4" cy="40.8" rx="3.4" ry="3.7" fill="#8aa452" opacity="0.5"/><ellipse cx="432.8" cy="113.9" rx="3.3" ry="2.6" fill="#8aa452" opacity="0.5"/><ellipse cx="418.5" cy="76.1" rx="5.4" ry="3.4" fill="#7d9548" opacity="0.5"/><ellipse cx="395.3" cy="58.6" rx="4.9" ry="2.9" fill="#9aae60" opacity="0.5"/><ellipse cx="397.8" cy="90.0" rx="4.9" ry="4.1" fill="#7d9548" opacity="0.5"/><ellipse cx="431.0" cy="24.6" rx="3.6" ry="3.6" fill="#7d9548" opacity="0.5"/><ellipse cx="387.4" cy="63.4" rx="5.8" ry="2.8" fill="#8aa452" opacity="0.5"/><ellipse cx="417.6" cy="20.0" rx="5.1" ry="4.3" fill="#5d7632" opacity="0.5"/><ellipse cx="414.3" cy="26.8" rx="6.2" ry="4.5" fill="#5d7632" opacity="0.5"/><ellipse cx="450.8" cy="27.2" rx="4.4" ry="2.1" fill="#9aae60" opacity="0.5"/><ellipse cx="387.5" cy="33.5" rx="3.8" ry="3.8" fill="#7d9548" opacity="0.5"/><ellipse cx="415.6" cy="97.0" rx="6.8" ry="3.1" fill="#7d9548" opacity="0.5"/><ellipse cx="404.6" cy="27.2" rx="4.4" ry="3.4" fill="#5d7632" opacity="0.5"/><ellipse cx="472.7" cy="73.2" rx="4.9" ry="4.0" fill="#8aa452" opacity="0.5"/><ellipse cx="456.2" cy="10.2" rx="6.6" ry="4.3" fill="#8aa452" opacity="0.5"/><ellipse cx="352.5" cy="66.3" rx="4.9" ry="5.4" fill="#7f9448" opacity="0.45"/><ellipse cx="239.8" cy="84.0" rx="8.9" ry="4.2" fill="#7f9448" opacity="0.45"/><ellipse cx="258.4" cy="92.1" rx="7.6" ry="3.5" fill="#7f9448" opacity="0.45"/><ellipse cx="184.3" cy="48.3" rx="8.5" ry="5.4" fill="#7f9448" opacity="0.45"/><ellipse cx="189.5" cy="85.5" rx="8.9" ry="5.0" fill="#7f9448" opacity="0.45"/><ellipse cx="244.6" cy="70.2" rx="4.7" ry="3.0" fill="#7f9448" opacity="0.45"/><ellipse cx="412.1" cy="75.7" rx="6.6" ry="5.8" fill="#7f9448" opacity="0.45"/><ellipse cx="267.1" cy="87.9" rx="8.1" ry="3.6" fill="#7f9448" opacity="0.45"/><ellipse cx="218.0" cy="56.1" rx="5.2" ry="4.8" fill="#7f9448" opacity="0.45"/><ellipse cx="220.0" cy="63.0" rx="4.7" ry="5.7" fill="#7f9448" opacity="0.45"/><ellipse cx="245.5" cy="65.2" rx="6.9" ry="5.7" fill="#7f9448" opacity="0.45"/><ellipse cx="263.6" cy="90.5" rx="6.5" ry="4.6" fill="#7f9448" opacity="0.45"/><ellipse cx="291.3" cy="41.0" rx="6.2" ry="3.5" fill="#7f9448" opacity="0.45"/><ellipse cx="151.1" cy="84.0" rx="4.9" ry="4.4" fill="#7f9448" opacity="0.45"/></g><path d="M343.7 249.0l0.2 -13.2" stroke="#c8a66a" stroke-width="0.8" opacity="0.6"/><path d="M368.1 301.3l-3.7 -7.3" stroke="#d4b47c" stroke-width="1.0" opacity="0.6"/><path d="M240.7 249.9l4.9 -22.7" stroke="#7a5a30" stroke-width="0.7" opacity="0.6"/><path d="M461.4 257.0l-2.7 -10.4" stroke="#c8a66a" stroke-width="0.8" opacity="0.6"/><path d="M226.6 310.6l4.5 -21.4" stroke="#8a6838" stroke-width="1.1" opacity="0.6"/><path d="M423.2 192.4l-1.0 -15.8" stroke="#7a5a30" stroke-width="0.8" opacity="0.6"/><path d="M34.4 198.5l2.0 -7.6" stroke="#d4b47c" stroke-width="1.0" opacity="0.6"/><path d="M73.2 274.6l-4.3 -20.5" stroke="#caa870" stroke-width="1.1" opacity="0.6"/><path d="M104.1 312.4l-0.2 -14.8" stroke="#a07c48" stroke-width="1.0" opacity="0.6"/><path d="M76.5 229.0l-1.9 -17.3" stroke="#caa870" stroke-width="0.7" opacity="0.6"/><path d="M43.7 218.6l-0.5 -13.4" stroke="#a07c48" stroke-width="0.5" opacity="0.6"/><path d="M157.1 259.8l-5.2 -17.3" stroke="#caa870" stroke-width="1.1" opacity="0.6"/><path d="M49.7 202.5l3.3 -6.9" stroke="#8a6838" stroke-width="1.0" opacity="0.6"/><path d="M388.6 295.9l5.4 -20.9" stroke="#7a5a30" stroke-width="0.6" opacity="0.6"/><path d="M435.7 251.3l-4.9 -21.4" stroke="#d4b47c" stroke-width="1.0" opacity="0.6"/><path d="M86.9 303.2l-5.8 -11.9" stroke="#d4b47c" stroke-width="1.0" opacity="0.6"/><path d="M39.7 297.0l4.4 -7.5" stroke="#7a5a30" stroke-width="0.5" opacity="0.6"/><path d="M471.3 226.8l1.5 -26.1" stroke="#d4b47c" stroke-width="0.8" opacity="0.6"/><path d="M113.0 177.5l-5.4 -9.6" stroke="#caa870" stroke-width="1.1" opacity="0.6"/><path d="M298.0 245.0l-0.7 -10.5" stroke="#a07c48" stroke-width="0.6" opacity="0.6"/><path d="M164.5 162.9l-5.8 -11.5" stroke="#a07c48" stroke-width="0.8" opacity="0.6"/><path d="M463.6 242.3l-0.6 -11.4" stroke="#a07c48" stroke-width="1.0" opacity="0.6"/><path d="M204.9 239.2l-1.3 -24.4" stroke="#c8a66a" stroke-width="0.7" opacity="0.6"/><path d="M102.0 196.7l4.6 -10.4" stroke="#a07c48" stroke-width="0.9" opacity="0.6"/><path d="M191.8 215.6l-4.4 -7.2" stroke="#d4b47c" stroke-width="0.9" opacity="0.6"/><path d="M417.1 228.9l2.0 -7.2" stroke="#7a5a30" stroke-width="1.0" opacity="0.6"/><path d="M317.8 205.1l-2.5 -11.3" stroke="#7a5a30" stroke-width="0.6" opacity="0.6"/><path d="M127.5 160.6l-2.1 -14.0" stroke="#c8a66a" stroke-width="0.7" opacity="0.6"/><path d="M16.3 301.2l-3.8 -10.8" stroke="#8a6838" stroke-width="0.7" opacity="0.6"/><path d="M225.0 240.4l0.1 -10.4" stroke="#d4b47c" stroke-width="0.6" opacity="0.6"/><path d="M387.3 183.0l-1.3 -18.9" stroke="#8a6838" stroke-width="0.7" opacity="0.6"/><path d="M110.4 253.7l3.0 -17.6" stroke="#a07c48" stroke-width="1.0" opacity="0.6"/><path d="M371.6 255.4l2.6 -22.8" stroke="#7a5a30" stroke-width="0.6" opacity="0.6"/><path d="M343.2 262.9l4.0 -7.0" stroke="#c8a66a" stroke-width="0.9" opacity="0.6"/><path d="M347.8 290.0l0.3 -9.1" stroke="#c8a66a" stroke-width="0.8" opacity="0.6"/><path d="M385.3 162.6l3.6 -21.1" stroke="#a07c48" stroke-width="0.9" opacity="0.6"/><path d="M328.6 196.8l-4.4 -6.7" stroke="#8a6838" stroke-width="1.1" opacity="0.6"/><path d="M178.5 232.2l-5.8 -7.1" stroke="#c8a66a" stroke-width="0.9" opacity="0.6"/><path d="M231.9 160.5l3.0 -23.5" stroke="#c8a66a" stroke-width="1.0" opacity="0.6"/><path d="M43.6 244.2l-0.3 -22.4" stroke="#d4b47c" stroke-width="1.0" opacity="0.6"/><path d="M111.3 281.0l1.8 -11.1" stroke="#7a5a30" stroke-width="0.8" opacity="0.6"/><path d="M181.3 236.6l3.2 -21.0" stroke="#c8a66a" stroke-width="0.9" opacity="0.6"/><path d="M94.0 256.0l1.8 -13.3" stroke="#a07c48" stroke-width="0.7" opacity="0.6"/><path d="M269.1 162.0l-2.8 -7.3" stroke="#a07c48" stroke-width="0.6" opacity="0.6"/><path d="M103.2 238.3l-2.6 -21.6" stroke="#7a5a30" stroke-width="0.8" opacity="0.6"/><path d="M56.2 303.0l5.7 -10.4" stroke="#7a5a30" stroke-width="0.5" opacity="0.6"/><path d="M217.6 291.2l-0.6 -27.3" stroke="#8a6838" stroke-width="0.7" opacity="0.6"/><path d="M434.4 308.9l-4.9 -7.6" stroke="#a07c48" stroke-width="0.8" opacity="0.6"/><path d="M451.6 181.2l0.1 -24.0" stroke="#d4b47c" stroke-width="0.9" opacity="0.6"/><path d="M109.7 303.6l-5.7 -16.7" stroke="#d4b47c" stroke-width="1.1" opacity="0.6"/><path d="M323.1 224.9l-1.0 -22.0" stroke="#7a5a30" stroke-width="0.7" opacity="0.6"/><path d="M398.3 160.3l4.1 -22.5" stroke="#d4b47c" stroke-width="1.1" opacity="0.6"/><path d="M92.8 161.9l-3.0 -22.3" stroke="#d4b47c" stroke-width="0.7" opacity="0.6"/><path d="M473.4 254.3l-0.9 -13.9" stroke="#8a6838" stroke-width="1.0" opacity="0.6"/><path d="M133.0 168.3l1.6 -20.6" stroke="#caa870" stroke-width="0.6" opacity="0.6"/><path d="M126.0 241.8l-1.5 -10.2" stroke="#7a5a30" stroke-width="1.0" opacity="0.6"/><path d="M384.9 260.9l5.3 -26.1" stroke="#c8a66a" stroke-width="0.6" opacity="0.6"/><path d="M38.2 309.4l1.4 -15.0" stroke="#caa870" stroke-width="0.9" opacity="0.6"/><path d="M135.7 167.8l-4.5 -26.4" stroke="#7a5a30" stroke-width="0.7" opacity="0.6"/><path d="M133.5 200.9l1.8 -22.3" stroke="#7a5a30" stroke-width="0.9" opacity="0.6"/><path d="M142.6 249.2l-4.0 -14.7" stroke="#caa870" stroke-width="0.5" opacity="0.6"/><path d="M237.3 289.9l-0.6 -18.1" stroke="#8a6838" stroke-width="1.1" opacity="0.6"/><path d="M213.3 182.3l-4.9 -10.2" stroke="#8a6838" stroke-width="0.8" opacity="0.6"/><path d="M151.3 218.9l-3.6 -23.8" stroke="#d4b47c" stroke-width="0.9" opacity="0.6"/><path d="M195.7 226.2l-1.5 -17.5" stroke="#8a6838" stroke-width="1.0" opacity="0.6"/><path d="M236.1 251.9l2.2 -13.9" stroke="#c8a66a" stroke-width="0.9" opacity="0.6"/><path d="M409.0 194.6l-3.0 -12.0" stroke="#7a5a30" stroke-width="0.9" opacity="0.6"/><path d="M204.7 209.9l5.6 -23.9" stroke="#caa870" stroke-width="0.5" opacity="0.6"/><path d="M336.3 303.3l1.0 -16.4" stroke="#d4b47c" stroke-width="0.5" opacity="0.6"/><path d="M440.9 308.5l-0.4 -17.6" stroke="#7a5a30" stroke-width="0.6" opacity="0.6"/><path d="M51.7 184.7l2.2 -17.5" stroke="#a07c48" stroke-width="0.9" opacity="0.6"/><path d="M401.2 303.2l3.3 -7.9" stroke="#d4b47c" stroke-width="1.0" opacity="0.6"/><path d="M110.2 307.2l-2.4 -20.2" stroke="#caa870" stroke-width="0.9" opacity="0.6"/><path d="M250.4 230.0l-4.8 -22.8" stroke="#8a6838" stroke-width="0.8" opacity="0.6"/><path d="M276.3 222.1l1.2 -10.9" stroke="#d4b47c" stroke-width="0.8" opacity="0.6"/><path d="M472.3 204.6l4.1 -13.0" stroke="#caa870" stroke-width="0.8" opacity="0.6"/><path d="M111.3 199.5l2.5 -27.1" stroke="#8a6838" stroke-width="0.5" opacity="0.6"/><path d="M92.0 301.6l-5.0 -20.2" stroke="#caa870" stroke-width="0.9" opacity="0.6"/><path d="M438.5 196.3l-1.9 -6.8" stroke="#7a5a30" stroke-width="0.7" opacity="0.6"/><path d="M187.9 161.1l4.1 -12.4" stroke="#d4b47c" stroke-width="0.6" opacity="0.6"/><path d="M459.7 209.9l-3.2 -24.0" stroke="#caa870" stroke-width="0.7" opacity="0.6"/><path d="M421.5 177.4l1.3 -19.7" stroke="#caa870" stroke-width="0.8" opacity="0.6"/><path d="M431.5 169.0l5.1 -19.1" stroke="#d4b47c" stroke-width="0.6" opacity="0.6"/><path d="M461.7 182.7l-5.3 -7.1" stroke="#7a5a30" stroke-width="0.8" opacity="0.6"/><path d="M337.5 210.3l-5.0 -8.5" stroke="#caa870" stroke-width="0.7" opacity="0.6"/><path d="M87.9 309.7l-5.6 -22.4" stroke="#a07c48" stroke-width="0.9" opacity="0.6"/><path d="M397.7 317.6l-4.7 -15.7" stroke="#d4b47c" stroke-width="0.7" opacity="0.6"/><path d="M166.6 312.9l5.6 -8.7" stroke="#caa870" stroke-width="0.7" opacity="0.6"/><path d="M364.4 209.4l-4.9 -23.7" stroke="#a07c48" stroke-width="0.8" opacity="0.6"/><path d="M176.7 307.1l-1.6 -10.2" stroke="#7a5a30" stroke-width="0.5" opacity="0.6"/><path d="M194.7 289.9l-5.5 -22.9" stroke="#d4b47c" stroke-width="0.8" opacity="0.6"/><path d="M380.8 169.9l-5.2 -10.3" stroke="#c8a66a" stroke-width="0.7" opacity="0.6"/><path d="M129.1 313.2l-2.9 -19.6" stroke="#a07c48" stroke-width="0.9" opacity="0.6"/><path d="M438.1 207.6l1.1 -21.9" stroke="#a07c48" stroke-width="1.1" opacity="0.6"/><path d="M31.0 292.2l2.6 -8.4" stroke="#7a5a30" stroke-width="1.1" opacity="0.6"/><path d="M183.2 200.2l-0.1 -15.5" stroke="#7a5a30" stroke-width="0.6" opacity="0.6"/><path d="M380.4 278.2l3.3 -24.1" stroke="#c8a66a" stroke-width="0.6" opacity="0.6"/><path d="M408.2 233.7l1.1 -23.2" stroke="#c8a66a" stroke-width="0.6" opacity="0.6"/><path d="M356.9 199.6l-5.6 -7.4" stroke="#c8a66a" stroke-width="0.8" opacity="0.6"/><path d="M76.2 228.2l-5.1 -8.3" stroke="#c8a66a" stroke-width="0.6" opacity="0.6"/><path d="M45.7 239.8l-0.6 -21.6" stroke="#caa870" stroke-width="0.6" opacity="0.6"/><path d="M218.5 302.6l0.5 -11.2" stroke="#a07c48" stroke-width="1.0" opacity="0.6"/><path d="M369.6 207.0l-2.8 -12.1" stroke="#8a6838" stroke-width="0.9" opacity="0.6"/><path d="M94.4 199.6l-4.2 -11.4" stroke="#c8a66a" stroke-width="0.6" opacity="0.6"/><path d="M30.7 200.3l0.3 -11.4" stroke="#a07c48" stroke-width="1.0" opacity="0.6"/><path d="M309.7 318.6l-0.3 -8.3" stroke="#caa870" stroke-width="1.0" opacity="0.6"/><path d="M433.4 166.5l-4.6 -12.5" stroke="#caa870" stroke-width="0.9" opacity="0.6"/><path d="M392.4 191.1l0.2 -7.7" stroke="#caa870" stroke-width="0.8" opacity="0.6"/><path d="M123.2 284.4l-4.7 -26.8" stroke="#c8a66a" stroke-width="0.9" opacity="0.6"/><path d="M165.8 166.0l-5.5 -13.5" stroke="#8a6838" stroke-width="0.5" opacity="0.6"/><path d="M347.1 306.2l3.8 -23.9" stroke="#7a5a30" stroke-width="0.9" opacity="0.6"/><path d="M87.8 210.0l3.5 -10.5" stroke="#c8a66a" stroke-width="0.8" opacity="0.6"/><path d="M193.5 287.3l-4.1 -20.6" stroke="#c8a66a" stroke-width="0.6" opacity="0.6"/><path d="M77.6 271.3l-2.6 -15.0" stroke="#8a6838" stroke-width="0.8" opacity="0.6"/><path d="M24.3 279.3l-1.0 -25.4" stroke="#d4b47c" stroke-width="1.0" opacity="0.6"/><path d="M472.4 218.2l2.7 -10.3" stroke="#caa870" stroke-width="1.1" opacity="0.6"/><path d="M205.8 185.1l-4.9 -8.5" stroke="#c8a66a" stroke-width="1.0" opacity="0.6"/><path d="M218.5 186.0l0.6 -6.3" stroke="#a07c48" stroke-width="1.0" opacity="0.6"/><path d="M188.0 251.7l2.8 -26.4" stroke="#caa870" stroke-width="0.6" opacity="0.6"/><path d="M134.3 243.4l-4.7 -26.4" stroke="#7a5a30" stroke-width="1.0" opacity="0.6"/><path d="M375.5 288.8l4.0 -12.6" stroke="#d4b47c" stroke-width="1.1" opacity="0.6"/><path d="M228.8 168.5l-1.3 -26.4" stroke="#a07c48" stroke-width="0.9" opacity="0.6"/><path d="M390.8 185.6l-3.3 -23.3" stroke="#7a5a30" stroke-width="0.9" opacity="0.6"/><path d="M93.0 235.7l-5.5 -18.4" stroke="#c8a66a" stroke-width="0.6" opacity="0.6"/><path d="M170.3 183.9l3.8 -27.4" stroke="#caa870" stroke-width="0.5" opacity="0.6"/><path d="M266.6 281.2l4.1 -6.8" stroke="#d4b47c" stroke-width="0.7" opacity="0.6"/><path d="M216.0 295.8l1.8 -23.1" stroke="#8a6838" stroke-width="0.8" opacity="0.6"/><path d="M201.8 265.4l-0.7 -15.8" stroke="#d4b47c" stroke-width="0.5" opacity="0.6"/><path d="M467.4 234.4l1.4 -15.8" stroke="#7a5a30" stroke-width="1.0" opacity="0.6"/><path d="M384.2 224.1l-1.7 -7.5" stroke="#8a6838" stroke-width="0.6" opacity="0.6"/><path d="M209.5 241.6l1.6 -6.9" stroke="#d4b47c" stroke-width="1.1" opacity="0.6"/><path d="M148.7 275.3l3.0 -7.8" stroke="#7a5a30" stroke-width="0.9" opacity="0.6"/><path d="M371.7 164.1l1.4 -7.5" stroke="#a07c48" stroke-width="1.0" opacity="0.6"/><path d="M91.8 317.1l5.5 -16.8" stroke="#caa870" stroke-width="0.9" opacity="0.6"/><path d="M341.8 195.4l1.3 -24.3" stroke="#8a6838" stroke-width="0.6" opacity="0.6"/><path d="M425.0 204.0l-4.3 -23.9" stroke="#c8a66a" stroke-width="1.1" opacity="0.6"/><path d="M227.6 254.7l-3.2 -19.5" stroke="#8a6838" stroke-width="0.5" opacity="0.6"/><path d="M86.3 185.8l2.2 -26.6" stroke="#7a5a30" stroke-width="0.6" opacity="0.6"/><path d="M372.0 178.4l1.6 -17.7" stroke="#8a6838" stroke-width="1.1" opacity="0.6"/><path d="M214.7 243.4l4.8 -21.2" stroke="#8a6838" stroke-width="1.1" opacity="0.6"/><path d="M298.5 223.1l-2.8 -23.5" stroke="#8a6838" stroke-width="0.8" opacity="0.6"/><path d="M170.8 282.3l-3.9 -15.7" stroke="#a07c48" stroke-width="1.1" opacity="0.6"/><path d="M140.5 242.6l5.6 -12.8" stroke="#c8a66a" stroke-width="1.1" opacity="0.6"/><path d="M424.6 277.3l-3.3 -22.4" stroke="#8a6838" stroke-width="0.9" opacity="0.6"/><path d="M204.9 242.0l-4.4 -25.7" stroke="#caa870" stroke-width="0.9" opacity="0.6"/><path d="M21.6 168.7l-2.4 -18.5" stroke="#c8a66a" stroke-width="0.7" opacity="0.6"/><path d="M106.3 253.4l-3.5 -19.0" stroke="#c8a66a" stroke-width="1.0" opacity="0.6"/><path d="M75.2 162.3l2.5 -23.6" stroke="#7a5a30" stroke-width="0.6" opacity="0.6"/><path d="M302.5 299.4l-1.2 -23.2" stroke="#8a6838" stroke-width="1.1" opacity="0.6"/><path d="M26.6 291.3l1.1 -25.6" stroke="#c8a66a" stroke-width="0.8" opacity="0.6"/><path d="M444.2 277.4l4.8 -11.5" stroke="#d4b47c" stroke-width="0.5" opacity="0.6"/><path d="M12.0 189.7l4.9 -9.5" stroke="#d4b47c" stroke-width="0.5" opacity="0.6"/><path d="M261.1 310.5l-3.6 -9.1" stroke="#c8a66a" stroke-width="0.9" opacity="0.6"/><path d="M307.0 226.4l0.1 -19.5" stroke="#d4b47c" stroke-width="0.7" opacity="0.6"/><path d="M23.0 302.3l2.6 -23.2" stroke="#d4b47c" stroke-width="0.7" opacity="0.6"/><path d="M207.0 306.0l1.9 -7.8" stroke="#caa870" stroke-width="0.6" opacity="0.6"/><path d="M49.9 197.2l-2.0 -6.9" stroke="#a07c48" stroke-width="1.1" opacity="0.6"/><path d="M446.9 202.1l1.6 -7.2" stroke="#a07c48" stroke-width="0.8" opacity="0.6"/><path d="M373.7 243.7l1.7 -11.8" stroke="#caa870" stroke-width="0.6" opacity="0.6"/><path d="M240.5 187.2l4.1 -25.9" stroke="#caa870" stroke-width="1.1" opacity="0.6"/><path d="M353.7 212.3l-2.1 -25.4" stroke="#caa870" stroke-width="0.7" opacity="0.6"/><path d="M403.8 307.5l4.1 -27.6" stroke="#c8a66a" stroke-width="0.8" opacity="0.6"/><path d="M398.0 271.6l-0.8 -24.9" stroke="#a07c48" stroke-width="0.6" opacity="0.6"/><path d="M419.4 286.3l1.0 -14.6" stroke="#c8a66a" stroke-width="1.0" opacity="0.6"/><path d="M68.5 164.3l5.1 -8.3" stroke="#8a6838" stroke-width="1.1" opacity="0.6"/><path d="M332.2 164.9l1.7 -9.0" stroke="#d4b47c" stroke-width="0.9" opacity="0.6"/><path d="M349.2 170.5l-1.6 -19.0" stroke="#c8a66a" stroke-width="1.0" opacity="0.6"/><path d="M31.3 298.8l5.3 -26.1" stroke="#d4b47c" stroke-width="0.6" opacity="0.6"/><path d="M96.3 165.4l4.9 -26.9" stroke="#a07c48" stroke-width="0.6" opacity="0.6"/><path d="M356.2 261.2l-4.4 -16.5" stroke="#a07c48" stroke-width="0.6" opacity="0.6"/><path d="M151.3 227.8l-2.9 -6.5" stroke="#8a6838" stroke-width="0.5" opacity="0.6"/><path d="M360.2 305.7l1.2 -22.9" stroke="#7a5a30" stroke-width="1.0" opacity="0.6"/><path d="M293.1 165.0l-0.8 -15.1" stroke="#d4b47c" stroke-width="0.7" opacity="0.6"/><path d="M334.0 246.1l4.3 -10.8" stroke="#d4b47c" stroke-width="0.8" opacity="0.6"/><path d="M136.1 229.8l-2.5 -17.5" stroke="#d4b47c" stroke-width="0.5" opacity="0.6"/><path d="M232.7 238.6l-3.8 -23.5" stroke="#7a5a30" stroke-width="0.9" opacity="0.6"/><path d="M453.7 242.4l-4.1 -18.7" stroke="#caa870" stroke-width="1.1" opacity="0.6"/><path d="M109.7 186.5l3.2 -26.7" stroke="#7a5a30" stroke-width="1.0" opacity="0.6"/><path d="M330.5 285.9l-1.7 -19.8" stroke="#7a5a30" stroke-width="1.1" opacity="0.6"/><path d="M422.7 279.2l1.8 -15.3" stroke="#8a6838" stroke-width="0.6" opacity="0.6"/><path d="M124.8 304.2l-1.4 -17.0" stroke="#a07c48" stroke-width="0.6" opacity="0.6"/><path d="M218.5 245.0l3.0 -22.6" stroke="#a07c48" stroke-width="0.5" opacity="0.6"/><path d="M275.7 243.5l-0.6 -25.1" stroke="#c8a66a" stroke-width="0.9" opacity="0.6"/><path d="M80.4 230.2l1.0 -23.0" stroke="#caa870" stroke-width="0.7" opacity="0.6"/><path d="M304.6 271.5l-2.8 -17.2" stroke="#a07c48" stroke-width="1.0" opacity="0.6"/><path d="M292.6 275.7l2.7 -27.4" stroke="#c8a66a" stroke-width="0.8" opacity="0.6"/><path d="M76.3 212.5l5.7 -10.2" stroke="#a07c48" stroke-width="1.1" opacity="0.6"/><path d="M78.0 265.3l-4.2 -10.3" stroke="#caa870" stroke-width="1.0" opacity="0.6"/><path d="M347.6 229.6l1.7 -10.3" stroke="#d4b47c" stroke-width="0.7" opacity="0.6"/><path d="M419.6 234.2l4.3 -6.3" stroke="#7a5a30" stroke-width="0.9" opacity="0.6"/><path d="M237.2 261.2l-4.3 -16.2" stroke="#c8a66a" stroke-width="0.9" opacity="0.6"/><path d="M2.6 198.8l2.4 -24.8" stroke="#c8a66a" stroke-width="0.9" opacity="0.6"/><path d="M199.6 196.6l4.6 -21.9" stroke="#a07c48" stroke-width="0.9" opacity="0.6"/><path d="M404.1 268.7l-0.6 -20.1" stroke="#8a6838" stroke-width="0.7" opacity="0.6"/><path d="M332.1 303.2l-1.2 -11.3" stroke="#a07c48" stroke-width="0.9" opacity="0.6"/><path d="M118.5 227.8l1.5 -16.0" stroke="#7a5a30" stroke-width="0.8" opacity="0.6"/><path d="M313.4 299.7l-2.1 -25.7" stroke="#d4b47c" stroke-width="0.7" opacity="0.6"/><path d="M232.2 315.9l0.5 -6.8" stroke="#caa870" stroke-width="0.9" opacity="0.6"/><path d="M450.9 192.0l4.2 -13.7" stroke="#7a5a30" stroke-width="0.8" opacity="0.6"/><path d="M340.0 242.0l3.9 -20.1" stroke="#c8a66a" stroke-width="0.7" opacity="0.6"/><path d="M351.8 233.1l-3.8 -27.8" stroke="#c8a66a" stroke-width="1.0" opacity="0.6"/><path d="M58.0 317.5l-5.3 -13.8" stroke="#8a6838" stroke-width="0.7" opacity="0.6"/><path d="M29.2 172.0l1.5 -26.1" stroke="#a07c48" stroke-width="0.7" opacity="0.6"/><path d="M125.7 195.9l5.3 -22.3" stroke="#c8a66a" stroke-width="1.1" opacity="0.6"/><path d="M471.3 313.7l-4.0 -16.2" stroke="#d4b47c" stroke-width="1.0" opacity="0.6"/><path d="M300.7 235.1l-3.3 -18.4" stroke="#caa870" stroke-width="0.7" opacity="0.6"/><path d="M302.8 291.0l-0.4 -24.0" stroke="#8a6838" stroke-width="1.0" opacity="0.6"/><path d="M307.9 284.8l3.4 -16.3" stroke="#caa870" stroke-width="0.7" opacity="0.6"/><path d="M178.3 200.6l-3.8 -15.4" stroke="#d4b47c" stroke-width="1.0" opacity="0.6"/><path d="M378.7 217.3l-2.2 -20.4" stroke="#7a5a30" stroke-width="0.8" opacity="0.6"/><path d="M302.1 265.5l5.1 -14.0" stroke="#7a5a30" stroke-width="0.5" opacity="0.6"/><path d="M392.4 304.9l-4.3 -23.2" stroke="#8a6838" stroke-width="0.9" opacity="0.6"/><path d="M7.1 161.8l1.9 -26.9" stroke="#8a6838" stroke-width="0.9" opacity="0.6"/><path d="M274.2 296.7l-0.6 -10.1" stroke="#caa870" stroke-width="0.6" opacity="0.6"/><path d="M190.8 245.5l2.3 -19.4" stroke="#d4b47c" stroke-width="0.9" opacity="0.6"/><path d="M423.7 286.1l-3.6 -24.5" stroke="#a07c48" stroke-width="0.6" opacity="0.6"/><path d="M37.3 294.3l-4.6 -20.8" stroke="#d4b47c" stroke-width="0.7" opacity="0.6"/><path d="M111.0 182.3l-5.3 -16.8" stroke="#7a5a30" stroke-width="1.0" opacity="0.6"/><path d="M332.0 199.5l1.2 -9.6" stroke="#a07c48" stroke-width="0.5" opacity="0.6"/><path d="M398.5 234.9l2.0 -18.4" stroke="#7a5a30" stroke-width="0.7" opacity="0.6"/><path d="M198.5 313.7l1.6 -7.7" stroke="#a07c48" stroke-width="0.9" opacity="0.6"/><path d="M9.7 167.3l6.0 -22.2" stroke="#d4b47c" stroke-width="0.8" opacity="0.6"/><path d="M229.7 303.6l2.6 -6.7" stroke="#a07c48" stroke-width="0.6" opacity="0.6"/><path d="M44.8 265.4l3.3 -13.5" stroke="#c8a66a" stroke-width="1.0" opacity="0.6"/><path d="M99.9 229.6l0.6 -15.3" stroke="#8a6838" stroke-width="0.7" opacity="0.6"/><path d="M392.3 224.6l-2.7 -17.1" stroke="#c8a66a" stroke-width="0.7" opacity="0.6"/><path d="M96.5 238.8l-3.7 -8.6" stroke="#a07c48" stroke-width="0.7" opacity="0.6"/><path d="M278.0 261.6l-5.5 -23.3" stroke="#a07c48" stroke-width="0.8" opacity="0.6"/><path d="M192.5 251.8l-4.7 -14.8" stroke="#d4b47c" stroke-width="0.6" opacity="0.6"/><path d="M436.8 257.4l3.5 -20.5" stroke="#c8a66a" stroke-width="0.9" opacity="0.6"/><path d="M292.3 260.3l1.2 -21.3" stroke="#a07c48" stroke-width="0.5" opacity="0.6"/><path d="M18.7 261.4l-3.9 -19.8" stroke="#a07c48" stroke-width="0.6" opacity="0.6"/><path d="M17.5 283.9l1.9 -26.1" stroke="#8a6838" stroke-width="1.0" opacity="0.6"/><path d="M65.7 209.5l4.3 -21.6" stroke="#caa870" stroke-width="0.8" opacity="0.6"/><path d="M151.0 228.9l5.2 -20.1" stroke="#d4b47c" stroke-width="0.8" opacity="0.6"/><path d="M247.5 292.0l-0.9 -23.0" stroke="#a07c48" stroke-width="1.1" opacity="0.6"/><path d="M211.6 162.3l1.1 -14.5" stroke="#a07c48" stroke-width="1.1" opacity="0.6"/><path d="M225.4 226.0l1.7 -8.2" stroke="#caa870" stroke-width="1.0" opacity="0.6"/><path d="M297.1 228.3l2.0 -6.2" stroke="#d4b47c" stroke-width="0.6" opacity="0.6"/><path d="M57.5 235.6l0.8 -12.1" stroke="#7a5a30" stroke-width="0.9" opacity="0.6"/><path d="M88.8 168.0l2.6 -23.0" stroke="#caa870" stroke-width="0.9" opacity="0.6"/><path d="M40.0 260.6l-0.5 -21.6" stroke="#8a6838" stroke-width="1.0" opacity="0.6"/><path d="M25.0 165.1l4.6 -7.3" stroke="#a07c48" stroke-width="1.0" opacity="0.6"/><path d="M37.8 209.8l-4.0 -22.0" stroke="#7a5a30" stroke-width="0.9" opacity="0.6"/><path d="M149.9 311.8l-0.4 -22.0" stroke="#caa870" stroke-width="0.6" opacity="0.6"/><path d="M377.9 218.1l1.6 -20.2" stroke="#7a5a30" stroke-width="0.8" opacity="0.6"/><path d="M368.8 232.4l3.1 -12.0" stroke="#8a6838" stroke-width="0.7" opacity="0.6"/><path d="M28.7 315.8l3.9 -21.5" stroke="#8a6838" stroke-width="1.0" opacity="0.6"/><path d="M344.0 162.5l4.0 -9.3" stroke="#c8a66a" stroke-width="0.8" opacity="0.6"/><path d="M421.0 220.3l1.2 -21.1" stroke="#caa870" stroke-width="1.0" opacity="0.6"/><path d="M134.3 160.3l-0.9 -11.8" stroke="#c8a66a" stroke-width="1.1" opacity="0.6"/><path d="M361.8 285.3l-4.3 -12.3" stroke="#c8a66a" stroke-width="0.6" opacity="0.6"/><path d="M462.3 287.6l3.3 -18.1" stroke="#7a5a30" stroke-width="0.7" opacity="0.6"/><path d="M40.3 248.6l-3.6 -23.5" stroke="#a07c48" stroke-width="1.1" opacity="0.6"/><path d="M110.9 257.1l-0.4 -20.9" stroke="#caa870" stroke-width="1.1" opacity="0.6"/><path d="M277.9 161.5l0.5 -14.5" stroke="#c8a66a" stroke-width="1.0" opacity="0.6"/><path d="M366.0 197.3l4.8 -18.8" stroke="#c8a66a" stroke-width="0.7" opacity="0.6"/><path d="M239.9 192.3l-4.9 -10.7" stroke="#a07c48" stroke-width="0.7" opacity="0.6"/><path d="M273.9 217.4l4.3 -23.2" stroke="#caa870" stroke-width="0.5" opacity="0.6"/><path d="M472.6 219.8l1.6 -8.3" stroke="#d4b47c" stroke-width="0.6" opacity="0.6"/><path d="M283.1 215.2l-5.8 -17.4" stroke="#d4b47c" stroke-width="0.6" opacity="0.6"/><path d="M412.7 250.5l-3.4 -18.9" stroke="#8a6838" stroke-width="0.8" opacity="0.6"/><path d="M448.6 282.8l5.6 -24.0" stroke="#8a6838" stroke-width="1.0" opacity="0.6"/><path d="M160.6 319.1l-5.7 -14.3" stroke="#d4b47c" stroke-width="0.8" opacity="0.6"/><path d="M412.7 233.3l4.9 -26.8" stroke="#d4b47c" stroke-width="1.0" opacity="0.6"/><path d="M303.3 307.5l-4.9 -21.5" stroke="#8a6838" stroke-width="0.8" opacity="0.6"/><path d="M303.7 313.0l-1.3 -20.7" stroke="#7a5a30" stroke-width="1.0" opacity="0.6"/><path d="M175.8 197.6l-3.9 -21.9" stroke="#8a6838" stroke-width="1.1" opacity="0.6"/><path d="M28.1 248.5l5.0 -6.6" stroke="#8a6838" stroke-width="1.0" opacity="0.6"/><path d="M336.4 263.5l-5.3 -27.7" stroke="#caa870" stroke-width="0.7" opacity="0.6"/><path d="M2.7 191.8l1.1 -22.5" stroke="#7a5a30" stroke-width="1.0" opacity="0.6"/><path d="M50.0 211.8l-4.5 -11.7" stroke="#7a5a30" stroke-width="0.7" opacity="0.6"/><path d="M209.2 289.2l4.7 -26.1" stroke="#7a5a30" stroke-width="0.9" opacity="0.6"/><path d="M92.5 165.8l-3.4 -26.4" stroke="#c8a66a" stroke-width="1.0" opacity="0.6"/><path d="M421.2 182.4l-4.8 -15.8" stroke="#7a5a30" stroke-width="1.0" opacity="0.6"/><path d="M297.8 232.4l3.9 -13.5" stroke="#7a5a30" stroke-width="0.6" opacity="0.6"/><path d="M173.5 213.1l-3.8 -22.2" stroke="#7a5a30" stroke-width="0.8" opacity="0.6"/><path d="M68.6 299.3l-1.1 -11.9" stroke="#caa870" stroke-width="0.5" opacity="0.6"/><path d="M270.6 207.4l-2.9 -23.7" stroke="#d4b47c" stroke-width="0.7" opacity="0.6"/><path d="M428.1 178.3l-5.3 -27.5" stroke="#a07c48" stroke-width="1.1" opacity="0.6"/><path d="M265.4 293.6l3.1 -8.6" stroke="#8a6838" stroke-width="0.8" opacity="0.6"/><path d="M124.0 198.2l-1.3 -11.2" stroke="#7a5a30" stroke-width="1.0" opacity="0.6"/><path d="M27.2 276.2l5.7 -12.5" stroke="#d4b47c" stroke-width="0.8" opacity="0.6"/><path d="M240.7 241.7l3.5 -15.7" stroke="#c8a66a" stroke-width="0.7" opacity="0.6"/><path d="M170.7 166.5l-2.7 -15.0" stroke="#caa870" stroke-width="0.6" opacity="0.6"/><path d="M85.4 283.3l-3.6 -21.7" stroke="#d4b47c" stroke-width="1.0" opacity="0.6"/><path d="M421.5 276.9l-3.9 -22.7" stroke="#caa870" stroke-width="0.9" opacity="0.6"/><path d="M335.5 289.9l-3.6 -18.8" stroke="#d4b47c" stroke-width="0.9" opacity="0.6"/><path d="M246.3 294.6l0.2 -26.2" stroke="#8a6838" stroke-width="0.7" opacity="0.6"/><path d="M399.1 298.3l-5.8 -16.8" stroke="#7a5a30" stroke-width="0.6" opacity="0.6"/><path d="M315.4 199.7l5.8 -18.4" stroke="#d4b47c" stroke-width="0.6" opacity="0.6"/><path d="M175.9 255.2l0.2 -6.1" stroke="#7a5a30" stroke-width="1.1" opacity="0.6"/><path d="M33.8 217.1l4.0 -11.4" stroke="#8a6838" stroke-width="1.0" opacity="0.6"/><path d="M411.5 252.2l-2.5 -25.8" stroke="#d4b47c" stroke-width="1.1" opacity="0.6"/><path d="M234.5 242.1l0.4 -17.7" stroke="#d4b47c" stroke-width="0.6" opacity="0.6"/><path d="M42.0 259.1l-2.3 -9.7" stroke="#c8a66a" stroke-width="1.0" opacity="0.6"/><path d="M14.3 175.4l-3.7 -21.4" stroke="#d4b47c" stroke-width="1.0" opacity="0.6"/><path d="M301.9 234.2l-0.7 -11.2" stroke="#8a6838" stroke-width="1.0" opacity="0.6"/><path d="M339.9 167.2l-0.1 -8.7" stroke="#c8a66a" stroke-width="1.0" opacity="0.6"/><path d="M52.2 179.4l0.5 -25.5" stroke="#caa870" stroke-width="1.0" opacity="0.6"/><path d="M69.8 251.7l-4.0 -22.4" stroke="#d4b47c" stroke-width="1.1" opacity="0.6"/><path d="M184.3 227.3l0.3 -24.5" stroke="#7a5a30" stroke-width="1.1" opacity="0.6"/><path d="M24.6 218.1l4.1 -14.8" stroke="#a07c48" stroke-width="0.8" opacity="0.6"/><path d="M465.1 288.7l3.8 -26.1" stroke="#c8a66a" stroke-width="0.5" opacity="0.6"/><path d="M245.2 313.3l-3.0 -26.6" stroke="#7a5a30" stroke-width="0.9" opacity="0.6"/><path d="M5.5 177.4l-2.1 -10.1" stroke="#caa870" stroke-width="0.8" opacity="0.6"/><path d="M9.9 182.3l3.3 -27.3" stroke="#7a5a30" stroke-width="0.9" opacity="0.6"/><path d="M383.6 301.5l-5.6 -25.5" stroke="#a07c48" stroke-width="0.9" opacity="0.6"/><path d="M435.1 259.8l3.7 -19.8" stroke="#d4b47c" stroke-width="0.9" opacity="0.6"/><path d="M118.8 243.2l5.4 -15.5" stroke="#8a6838" stroke-width="0.6" opacity="0.6"/><path d="M164.7 186.7l5.5 -7.3" stroke="#c8a66a" stroke-width="1.0" opacity="0.6"/><path d="M40.0 254.4l-0.7 -26.5" stroke="#c8a66a" stroke-width="0.6" opacity="0.6"/><path d="M139.2 225.0l-3.1 -12.3" stroke="#d4b47c" stroke-width="0.9" opacity="0.6"/><path d="M136.1 232.7l-3.3 -21.3" stroke="#7a5a30" stroke-width="0.6" opacity="0.6"/><path d="M336.7 233.7l1.4 -18.1" stroke="#7a5a30" stroke-width="1.0" opacity="0.6"/><path d="M14.7 213.4l0.6 -10.2" stroke="#c8a66a" stroke-width="0.7" opacity="0.6"/><path d="M438.1 186.0l-2.1 -26.9" stroke="#8a6838" stroke-width="0.8" opacity="0.6"/><path d="M135.0 318.0l3.3 -12.5" stroke="#caa870" stroke-width="0.8" opacity="0.6"/><path d="M287.2 215.7l0.2 -20.5" stroke="#7a5a30" stroke-width="0.7" opacity="0.6"/><path d="M361.6 243.3l2.1 -27.8" stroke="#caa870" stroke-width="0.8" opacity="0.6"/><path d="M316.7 182.5l1.3 -10.5" stroke="#8a6838" stroke-width="1.0" opacity="0.6"/><path d="M245.4 278.2l3.1 -22.4" stroke="#7a5a30" stroke-width="0.7" opacity="0.6"/><path d="M298.9 261.1l-1.0 -21.5" stroke="#d4b47c" stroke-width="0.5" opacity="0.6"/><path d="M362.9 253.7l5.6 -17.0" stroke="#c8a66a" stroke-width="0.6" opacity="0.6"/><path d="M402.9 204.7l-4.7 -19.7" stroke="#7a5a30" stroke-width="0.9" opacity="0.6"/><path d="M136.5 216.4l0.3 -13.8" stroke="#c8a66a" stroke-width="0.7" opacity="0.6"/><path d="M152.6 285.9l-0.0 -24.7" stroke="#7a5a30" stroke-width="0.7" opacity="0.6"/><path d="M254.5 288.5l-1.5 -15.6" stroke="#caa870" stroke-width="0.6" opacity="0.6"/><path d="M436.2 211.8l4.1 -24.6" stroke="#8a6838" stroke-width="0.6" opacity="0.6"/><path d="M202.1 305.7l-5.4 -6.2" stroke="#c8a66a" stroke-width="1.0" opacity="0.6"/><path d="M142.1 245.8l1.4 -12.9" stroke="#7a5a30" stroke-width="0.8" opacity="0.6"/><path d="M245.2 269.6l-1.7 -14.6" stroke="#c8a66a" stroke-width="0.9" opacity="0.6"/><path d="M214.8 161.7l-3.2 -7.5" stroke="#7a5a30" stroke-width="0.7" opacity="0.6"/><path d="M190.0 249.8l4.6 -18.6" stroke="#7a5a30" stroke-width="0.8" opacity="0.6"/><path d="M208.6 259.9l-1.9 -27.9" stroke="#c8a66a" stroke-width="0.9" opacity="0.6"/><path d="M43.7 218.0l-5.1 -14.1" stroke="#8a6838" stroke-width="0.8" opacity="0.6"/><path d="M52.4 303.1l3.8 -21.2" stroke="#c8a66a" stroke-width="1.0" opacity="0.6"/><path d="M199.5 185.0l0.1 -12.4" stroke="#c8a66a" stroke-width="1.0" opacity="0.6"/><path d="M195.4 169.6l-4.7 -18.4" stroke="#c8a66a" stroke-width="1.1" opacity="0.6"/><path d="M301.7 166.8l3.5 -15.1" stroke="#8a6838" stroke-width="0.9" opacity="0.6"/><path d="M262.1 306.7l-4.8 -14.7" stroke="#d4b47c" stroke-width="0.9" opacity="0.6"/><path d="M93.2 239.7l-2.8 -18.2" stroke="#a07c48" stroke-width="1.0" opacity="0.6"/><path d="M243.8 183.0l1.2 -10.4" stroke="#caa870" stroke-width="0.6" opacity="0.6"/><path d="M360.0 177.1l-4.0 -8.2" stroke="#c8a66a" stroke-width="0.8" opacity="0.6"/><path d="M221.6 228.9l1.8 -23.6" stroke="#a07c48" stroke-width="1.0" opacity="0.6"/><path d="M153.0 274.5l-4.0 -13.8" stroke="#8a6838" stroke-width="0.9" opacity="0.6"/><path d="M407.3 311.6l-3.7 -7.4" stroke="#c8a66a" stroke-width="0.7" opacity="0.6"/><path d="M25.9 302.5l5.5 -18.8" stroke="#7a5a30" stroke-width="0.5" opacity="0.6"/><path d="M113.0 195.7l1.0 -9.5" stroke="#caa870" stroke-width="0.7" opacity="0.6"/><path d="M426.1 290.5l1.2 -12.7" stroke="#7a5a30" stroke-width="1.1" opacity="0.6"/><path d="M32.0 268.4l1.0 -20.8" stroke="#7a5a30" stroke-width="0.7" opacity="0.6"/><path d="M414.9 237.5l-3.1 -23.4" stroke="#caa870" stroke-width="0.6" opacity="0.6"/><path d="M179.7 161.2l-1.2 -25.4" stroke="#8a6838" stroke-width="0.6" opacity="0.6"/><path d="M253.0 221.7l-5.2 -14.9" stroke="#d4b47c" stroke-width="0.8" opacity="0.6"/><path d="M432.8 248.6l-0.4 -14.5" stroke="#8a6838" stroke-width="0.6" opacity="0.6"/><path d="M16.6 266.3l-4.1 -13.5" stroke="#a07c48" stroke-width="0.6" opacity="0.6"/><path d="M93.0 247.2l0.7 -23.3" stroke="#7a5a30" stroke-width="1.0" opacity="0.6"/><path d="M381.5 185.5l2.7 -13.8" stroke="#7a5a30" stroke-width="0.9" opacity="0.6"/><path d="M275.3 207.6l-3.5 -16.5" stroke="#7a5a30" stroke-width="0.9" opacity="0.6"/><path d="M446.5 319.7l-0.7 -19.1" stroke="#8a6838" stroke-width="0.8" opacity="0.6"/><path d="M191.6 241.6l3.0 -8.8" stroke="#a07c48" stroke-width="0.8" opacity="0.6"/><path d="M257.2 203.3l-1.4 -23.0" stroke="#a07c48" stroke-width="0.9" opacity="0.6"/><path d="M68.8 162.4l2.3 -21.6" stroke="#caa870" stroke-width="0.7" opacity="0.6"/><path d="M314.1 177.4l-1.7 -18.4" stroke="#c8a66a" stroke-width="1.0" opacity="0.6"/><path d="M91.4 275.0l-2.5 -7.9" stroke="#a07c48" stroke-width="0.7" opacity="0.6"/><path d="M168.7 295.1l1.5 -16.2" stroke="#a07c48" stroke-width="1.0" opacity="0.6"/><path d="M62.6 204.2l2.2 -6.7" stroke="#a07c48" stroke-width="0.9" opacity="0.6"/><path d="M425.2 164.0l-0.4 -21.5" stroke="#7a5a30" stroke-width="0.7" opacity="0.6"/><path d="M298.1 189.1l5.0 -8.5" stroke="#a07c48" stroke-width="0.6" opacity="0.6"/><path d="M321.1 224.7l-0.8 -19.4" stroke="#8a6838" stroke-width="0.6" opacity="0.6"/><path d="M350.0 248.4l5.3 -19.8" stroke="#c8a66a" stroke-width="1.0" opacity="0.6"/><path d="M270.3 274.7l-0.8 -11.6" stroke="#a07c48" stroke-width="0.8" opacity="0.6"/><path d="M443.5 177.9l1.9 -22.8" stroke="#d4b47c" stroke-width="1.0" opacity="0.6"/><path d="M277.3 271.4l2.2 -27.4" stroke="#d4b47c" stroke-width="1.0" opacity="0.6"/><path d="M99.6 306.3l-5.0 -22.5" stroke="#a07c48" stroke-width="0.9" opacity="0.6"/><path d="M473.1 258.5l0.3 -10.9" stroke="#8a6838" stroke-width="1.1" opacity="0.6"/><path d="M201.0 308.8l2.9 -21.2" stroke="#a07c48" stroke-width="0.9" opacity="0.6"/><path d="M241.1 268.3l2.1 -10.5" stroke="#caa870" stroke-width="0.8" opacity="0.6"/><path d="M89.7 312.4l0.7 -24.2" stroke="#caa870" stroke-width="0.8" opacity="0.6"/><path d="M459.5 262.0l-3.0 -18.0" stroke="#d4b47c" stroke-width="0.6" opacity="0.6"/><path d="M164.6 174.8l-4.4 -20.0" stroke="#a07c48" stroke-width="0.9" opacity="0.6"/><path d="M317.7 198.1l0.2 -11.3" stroke="#7a5a30" stroke-width="0.6" opacity="0.6"/><path d="M303.8 271.7l2.5 -8.9" stroke="#c8a66a" stroke-width="0.8" opacity="0.6"/><path d="M158.1 290.5l3.1 -18.1" stroke="#caa870" stroke-width="0.9" opacity="0.6"/><path d="M73.4 316.7l-1.1 -24.5" stroke="#caa870" stroke-width="0.6" opacity="0.6"/><path d="M137.1 217.7l-5.3 -10.5" stroke="#8a6838" stroke-width="0.7" opacity="0.6"/><path d="M52.4 209.4l-4.1 -27.2" stroke="#7a5a30" stroke-width="0.8" opacity="0.6"/><path d="M172.1 186.9l-5.9 -7.6" stroke="#7a5a30" stroke-width="0.6" opacity="0.6"/><path d="M339.9 316.8l-4.7 -18.4" stroke="#7a5a30" stroke-width="1.1" opacity="0.6"/><path d="M231.5 285.4l-1.7 -13.1" stroke="#d4b47c" stroke-width="0.9" opacity="0.6"/><path d="M297.6 309.6l-3.0 -20.4" stroke="#caa870" stroke-width="0.5" opacity="0.6"/><path d="M354.3 164.0l-4.3 -14.7" stroke="#8a6838" stroke-width="0.6" opacity="0.6"/><path d="M302.5 295.3l-4.0 -26.4" stroke="#a07c48" stroke-width="1.0" opacity="0.6"/><path d="M351.9 212.3l3.9 -10.1" stroke="#8a6838" stroke-width="0.6" opacity="0.6"/><path d="M64.6 307.2l-3.0 -24.4" stroke="#d4b47c" stroke-width="0.5" opacity="0.6"/><path d="M268.7 260.5l2.5 -24.0" stroke="#d4b47c" stroke-width="1.1" opacity="0.6"/><path d="M234.3 239.9l-2.4 -9.5" stroke="#c8a66a" stroke-width="0.9" opacity="0.6"/><path d="M67.3 196.4l1.6 -9.0" stroke="#7a5a30" stroke-width="0.6" opacity="0.6"/><path d="M18.9 230.3l2.7 -10.2" stroke="#d4b47c" stroke-width="0.5" opacity="0.6"/><path d="M289.5 293.4l-4.3 -17.2" stroke="#d4b47c" stroke-width="0.9" opacity="0.6"/><path d="M243.9 227.4l-0.7 -13.5" stroke="#a07c48" stroke-width="1.1" opacity="0.6"/><path d="M83.6 276.0l-5.9 -14.3" stroke="#c8a66a" stroke-width="0.9" opacity="0.6"/><path d="M269.0 235.0l0.2 -17.9" stroke="#7a5a30" stroke-width="1.1" opacity="0.6"/><path d="M430.7 298.5l5.5 -27.4" stroke="#c8a66a" stroke-width="0.5" opacity="0.6"/><path d="M383.8 275.6l1.9 -13.3" stroke="#c8a66a" stroke-width="0.8" opacity="0.6"/><path d="M451.6 236.9l-2.4 -20.2" stroke="#8a6838" stroke-width="0.8" opacity="0.6"/><path d="M300.4 295.7l2.9 -10.9" stroke="#a07c48" stroke-width="0.6" opacity="0.6"/><path d="M313.1 219.5l-1.0 -18.8" stroke="#c8a66a" stroke-width="0.6" opacity="0.6"/><path d="M209.2 201.8l5.6 -11.0" stroke="#caa870" stroke-width="0.8" opacity="0.6"/><path d="M53.2 297.9l-4.9 -11.6" stroke="#c8a66a" stroke-width="0.9" opacity="0.6"/><path d="M336.1 196.3l0.5 -16.1" stroke="#a07c48" stroke-width="0.6" opacity="0.6"/><path d="M243.2 254.2l-1.1 -7.8" stroke="#d4b47c" stroke-width="1.0" opacity="0.6"/><path d="M63.7 240.5l4.1 -17.2" stroke="#d4b47c" stroke-width="0.9" opacity="0.6"/><path d="M455.2 242.4l2.2 -16.1" stroke="#c8a66a" stroke-width="0.6" opacity="0.6"/><path d="M455.1 250.1l-4.4 -23.0" stroke="#c8a66a" stroke-width="0.5" opacity="0.6"/><path d="M112.3 219.6l1.1 -6.3" stroke="#caa870" stroke-width="0.8" opacity="0.6"/><path d="M57.1 181.7l-4.9 -26.0" stroke="#caa870" stroke-width="0.8" opacity="0.6"/><path d="M434.9 299.3l2.9 -9.7" stroke="#8a6838" stroke-width="1.0" opacity="0.6"/><path d="M348.9 161.9l-3.1 -11.6" stroke="#c8a66a" stroke-width="0.9" opacity="0.6"/><path d="M449.4 275.5l1.2 -7.0" stroke="#d4b47c" stroke-width="0.7" opacity="0.6"/><path d="M65.5 220.2q3.1 -37.6 15.5 -62.7" stroke="#c9a770" stroke-width="0.8" fill="none" opacity="0.7"/><path d="M50.9 199.7q2.4 -57.4 11.9 -95.7" stroke="#d6b985" stroke-width="0.8" fill="none" opacity="0.7"/><path d="M88.0 229.6q-5.3 -59.4 -26.3 -99.0" stroke="#b08d58" stroke-width="0.8" fill="none" opacity="0.7"/><path d="M37.1 217.7q0.9 -49.9 4.4 -83.2" stroke="#b08d58" stroke-width="0.8" fill="none" opacity="0.7"/><path d="M167.2 219.4q4.0 -48.0 19.9 -80.0" stroke="#b08d58" stroke-width="0.8" fill="none" opacity="0.7"/><path d="M189.8 190.7q-4.5 -52.4 -22.5 -87.4" stroke="#d6b985" stroke-width="0.8" fill="none" opacity="0.7"/><path d="M96.8 191.6q-5.3 -76.2 -26.3 -127.0" stroke="#d6b985" stroke-width="0.8" fill="none" opacity="0.7"/><path d="M163.7 224.0q-1.2 -54.8 -6.2 -91.4" stroke="#c9a770" stroke-width="0.8" fill="none" opacity="0.7"/><path d="M138.6 212.4q3.6 -47.0 17.9 -78.3" stroke="#d6b985" stroke-width="0.8" fill="none" opacity="0.7"/><path d="M15.2 206.5q2.9 -46.4 14.7 -77.3" stroke="#d6b985" stroke-width="0.8" fill="none" opacity="0.7"/><path d="M124.9 200.6q1.3 -75.3 6.4 -125.5" stroke="#b08d58" stroke-width="0.8" fill="none" opacity="0.7"/><path d="M115.4 209.4q-5.9 -53.0 -29.7 -88.3" stroke="#d6b985" stroke-width="0.8" fill="none" opacity="0.7"/><path d="M96.7 201.3q2.8 -47.9 13.8 -79.9" stroke="#d6b985" stroke-width="0.8" fill="none" opacity="0.7"/><path d="M9.1 197.3q-3.3 -68.2 -16.4 -113.7" stroke="#b08d58" stroke-width="0.8" fill="none" opacity="0.7"/><path d="M12.7 239.6q-0.3 -53.1 -1.3 -88.5" stroke="#d6b985" stroke-width="0.8" fill="none" opacity="0.7"/><path d="M191.4 239.6q-0.4 -37.6 -2.0 -62.7" stroke="#c9a770" stroke-width="0.8" fill="none" opacity="0.7"/><path d="M174.5 228.7q0.3 -66.4 1.7 -110.6" stroke="#b08d58" stroke-width="0.8" fill="none" opacity="0.7"/><path d="M158.4 229.7q2.0 -47.4 9.8 -79.0" stroke="#c9a770" stroke-width="0.8" fill="none" opacity="0.7"/><path d="M136.3 205.2q1.4 -72.6 7.0 -121.1" stroke="#d6b985" stroke-width="0.8" fill="none" opacity="0.7"/><path d="M170.6 202.3q1.2 -77.9 5.8 -129.8" stroke="#b08d58" stroke-width="0.8" fill="none" opacity="0.7"/><path d="M12.1 206.9q3.9 -51.5 19.4 -85.9" stroke="#b08d58" stroke-width="0.8" fill="none" opacity="0.7"/><path d="M100.7 234.7q4.0 -74.8 19.8 -124.7" stroke="#c9a770" stroke-width="0.8" fill="none" opacity="0.7"/><path d="M27.1 190.4q-1.5 -77.8 -7.3 -129.7" stroke="#b08d58" stroke-width="0.8" fill="none" opacity="0.7"/><path d="M79.2 228.6q-0.1 -80.6 -0.7 -134.4" stroke="#c9a770" stroke-width="0.8" fill="none" opacity="0.7"/><path d="M60.3 205.4q-0.5 -70.9 -2.4 -118.1" stroke="#b08d58" stroke-width="0.8" fill="none" opacity="0.7"/><path d="M14.7 199.5q-0.2 -80.4 -0.8 -134.0" stroke="#b08d58" stroke-width="0.8" fill="none" opacity="0.7"/><path d="M116.1 239.4q1.7 -53.1 8.7 -88.6" stroke="#b08d58" stroke-width="0.8" fill="none" opacity="0.7"/><path d="M144.2 236.1q-2.8 -76.3 -14.0 -127.1" stroke="#c9a770" stroke-width="0.8" fill="none" opacity="0.7"/><path d="M55.2 202.9q-4.4 -37.1 -21.8 -61.8" stroke="#b08d58" stroke-width="0.8" fill="none" opacity="0.7"/><path d="M47.4 191.0q-1.5 -38.3 -7.6 -63.8" stroke="#d6b985" stroke-width="0.8" fill="none" opacity="0.7"/><path d="M56.5 215.1q-3.6 -40.8 -17.9 -68.0" stroke="#c9a770" stroke-width="0.8" fill="none" opacity="0.7"/><path d="M192.6 220.1q2.1 -39.8 10.5 -66.3" stroke="#d6b985" stroke-width="0.8" fill="none" opacity="0.7"/><path d="M68.2 196.8q-0.6 -45.0 -3.2 -75.1" stroke="#c9a770" stroke-width="0.8" fill="none" opacity="0.7"/><path d="M128.0 236.1q-2.7 -46.2 -13.7 -77.0" stroke="#d6b985" stroke-width="0.8" fill="none" opacity="0.7"/><path d="M5.4 214.3q2.0 -65.3 10.0 -108.8" stroke="#c9a770" stroke-width="0.8" fill="none" opacity="0.7"/><path d="M11.5 210.7q0.3 -38.2 1.3 -63.6" stroke="#b08d58" stroke-width="0.8" fill="none" opacity="0.7"/><path d="M155.2 239.4q3.4 -55.2 17.0 -92.0" stroke="#c9a770" stroke-width="0.8" fill="none" opacity="0.7"/><path d="M5.1 205.8q-2.9 -67.4 -14.3 -112.3" stroke="#b08d58" stroke-width="0.8" fill="none" opacity="0.7"/><path d="M122.8 226.2q-5.1 -51.8 -25.3 -86.3" stroke="#c9a770" stroke-width="0.8" fill="none" opacity="0.7"/><path d="M42.1 216.5q-2.4 -76.3 -12.1 -127.2" stroke="#b08d58" stroke-width="0.8" fill="none" opacity="0.7"/><path d="M84.6 216.9q-0.5 -64.2 -2.3 -107.1" stroke="#d6b985" stroke-width="0.8" fill="none" opacity="0.7"/><path d="M196.3 218.7q0.2 -47.0 0.9 -78.4" stroke="#d6b985" stroke-width="0.8" fill="none" opacity="0.7"/><path d="M95.5 191.6q0.5 -67.1 2.6 -111.8" stroke="#d6b985" stroke-width="0.8" fill="none" opacity="0.7"/><path d="M195.5 212.7q-0.8 -49.4 -3.8 -82.3" stroke="#b08d58" stroke-width="0.8" fill="none" opacity="0.7"/><path d="M26.4 190.5q0.6 -58.8 2.8 -98.1" stroke="#b08d58" stroke-width="0.8" fill="none" opacity="0.7"/><path d="M309.2 261.4q4.8 -44.4 24.1 -74.1" stroke="#c9a770" stroke-width="0.8" fill="none" opacity="0.7"/><path d="M401.2 236.1q-2.2 -49.6 -10.8 -82.6" stroke="#c9a770" stroke-width="0.8" fill="none" opacity="0.7"/><path d="M330.3 260.3q4.1 -56.6 20.6 -94.3" stroke="#d6b985" stroke-width="0.8" fill="none" opacity="0.7"/><path d="M446.0 269.0q-0.8 -49.0 -4.2 -81.7" stroke="#d6b985" stroke-width="0.8" fill="none" opacity="0.7"/><path d="M327.1 279.1q1.7 -48.0 8.6 -79.9" stroke="#b08d58" stroke-width="0.8" fill="none" opacity="0.7"/><path d="M454.8 249.5q3.1 -37.6 15.5 -62.7" stroke="#c9a770" stroke-width="0.8" fill="none" opacity="0.7"/><path d="M300.9 266.7q1.8 -32.4 9.0 -53.9" stroke="#b08d58" stroke-width="0.8" fill="none" opacity="0.7"/><path d="M410.8 247.5q-0.6 -38.2 -3.1 -63.7" stroke="#b08d58" stroke-width="0.8" fill="none" opacity="0.7"/><path d="M463.3 261.4q-1.7 -38.1 -8.7 -63.4" stroke="#b08d58" stroke-width="0.8" fill="none" opacity="0.7"/><path d="M417.6 242.1q-1.1 -42.8 -5.3 -71.3" stroke="#b08d58" stroke-width="0.8" fill="none" opacity="0.7"/><path d="M404.7 244.9q-2.1 -65.8 -10.3 -109.7" stroke="#d6b985" stroke-width="0.8" fill="none" opacity="0.7"/><path d="M433.4 253.9q2.9 -63.6 14.6 -106.0" stroke="#c9a770" stroke-width="0.8" fill="none" opacity="0.7"/><path d="M439.6 244.1q0.4 -41.9 1.8 -69.9" stroke="#c9a770" stroke-width="0.8" fill="none" opacity="0.7"/><path d="M311.3 264.1q0.1 -51.5 0.4 -85.9" stroke="#d6b985" stroke-width="0.8" fill="none" opacity="0.7"/><path d="M290.1 269.1q2.6 -60.6 13.1 -101.1" stroke="#c9a770" stroke-width="0.8" fill="none" opacity="0.7"/><path d="M431.3 273.2q3.8 -36.6 18.9 -60.9" stroke="#b08d58" stroke-width="0.8" fill="none" opacity="0.7"/><path d="M412.9 270.3q4.2 -35.5 21.1 -59.1" stroke="#c9a770" stroke-width="0.8" fill="none" opacity="0.7"/><path d="M456.9 237.5q-3.1 -56.5 -15.6 -94.2" stroke="#c9a770" stroke-width="0.8" fill="none" opacity="0.7"/><path d="M370.1 249.9q1.8 -44.9 8.9 -74.9" stroke="#d6b985" stroke-width="0.8" fill="none" opacity="0.7"/><path d="M419.0 274.1q-3.7 -65.3 -18.5 -108.8" stroke="#c9a770" stroke-width="0.8" fill="none" opacity="0.7"/><path d="M319.1 261.4q-2.8 -30.6 -13.9 -50.9" stroke="#d6b985" stroke-width="0.8" fill="none" opacity="0.7"/><path d="M324.9 251.5q-3.8 -33.8 -19.1 -56.3" stroke="#b08d58" stroke-width="0.8" fill="none" opacity="0.7"/><path d="M292.5 235.5q4.7 -64.5 23.7 -107.4" stroke="#d6b985" stroke-width="0.8" fill="none" opacity="0.7"/><path d="M363.1 238.9q-2.7 -54.7 -13.3 -91.1" stroke="#d6b985" stroke-width="0.8" fill="none" opacity="0.7"/><path d="M385.8 279.7q3.6 -49.1 17.8 -81.8" stroke="#c9a770" stroke-width="0.8" fill="none" opacity="0.7"/><g filter="url(#db1)"><ellipse cx="165.6" cy="264.0" rx="3.0" ry="1.9" fill="#6e4a26" opacity="0.35"/><ellipse cx="346.7" cy="267.7" rx="1.8" ry="1.3" fill="#6e4a26" opacity="0.35"/><ellipse cx="32.7" cy="252.8" rx="2.3" ry="1.4" fill="#6e4a26" opacity="0.35"/><ellipse cx="263.8" cy="273.6" rx="1.5" ry="1.7" fill="#6e4a26" opacity="0.35"/><ellipse cx="309.6" cy="285.4" rx="2.3" ry="1.7" fill="#6e4a26" opacity="0.35"/><ellipse cx="465.6" cy="306.8" rx="2.6" ry="1.4" fill="#6e4a26" opacity="0.35"/><ellipse cx="150.9" cy="277.2" rx="3.0" ry="1.4" fill="#6e4a26" opacity="0.35"/><ellipse cx="182.7" cy="276.6" rx="1.7" ry="2.0" fill="#6e4a26" opacity="0.35"/><ellipse cx="2.5" cy="289.5" rx="2.9" ry="1.3" fill="#6e4a26" opacity="0.35"/><ellipse cx="289.6" cy="274.5" rx="1.9" ry="1.2" fill="#6e4a26" opacity="0.35"/><ellipse cx="55.1" cy="304.8" rx="2.7" ry="1.9" fill="#6e4a26" opacity="0.35"/><ellipse cx="23.5" cy="295.1" rx="2.0" ry="1.6" fill="#6e4a26" opacity="0.35"/><ellipse cx="260.2" cy="270.5" rx="3.0" ry="1.0" fill="#6e4a26" opacity="0.35"/><ellipse cx="353.7" cy="305.5" rx="2.3" ry="1.6" fill="#6e4a26" opacity="0.35"/><ellipse cx="471.5" cy="265.2" rx="2.4" ry="1.7" fill="#6e4a26" opacity="0.35"/><ellipse cx="179.6" cy="296.3" rx="2.1" ry="1.5" fill="#6e4a26" opacity="0.35"/><ellipse cx="290.5" cy="294.0" rx="2.0" ry="1.6" fill="#6e4a26" opacity="0.35"/><ellipse cx="257.4" cy="264.5" rx="2.4" ry="1.3" fill="#6e4a26" opacity="0.35"/><ellipse cx="430.7" cy="280.8" rx="2.6" ry="1.5" fill="#6e4a26" opacity="0.35"/><ellipse cx="225.9" cy="264.4" rx="1.7" ry="1.9" fill="#6e4a26" opacity="0.35"/><ellipse cx="250.6" cy="284.1" rx="2.3" ry="1.8" fill="#6e4a26" opacity="0.35"/><ellipse cx="113.1" cy="261.2" rx="2.7" ry="1.5" fill="#6e4a26" opacity="0.35"/><ellipse cx="303.6" cy="303.8" rx="2.8" ry="1.9" fill="#6e4a26" opacity="0.35"/><ellipse cx="20.5" cy="274.8" rx="2.7" ry="1.8" fill="#6e4a26" opacity="0.35"/><ellipse cx="58.3" cy="260.0" rx="1.9" ry="1.1" fill="#6e4a26" opacity="0.35"/><ellipse cx="169.1" cy="302.2" rx="2.3" ry="1.5" fill="#6e4a26" opacity="0.35"/><ellipse cx="41.7" cy="275.7" rx="3.0" ry="1.7" fill="#6e4a26" opacity="0.35"/><ellipse cx="213.0" cy="281.1" rx="2.7" ry="1.8" fill="#6e4a26" opacity="0.35"/><ellipse cx="71.0" cy="294.2" rx="2.1" ry="1.5" fill="#6e4a26" opacity="0.35"/><ellipse cx="112.6" cy="274.1" rx="2.0" ry="1.4" fill="#6e4a26" opacity="0.35"/><ellipse cx="8.4" cy="263.1" rx="2.4" ry="1.1" fill="#6e4a26" opacity="0.35"/><ellipse cx="84.6" cy="296.7" rx="1.9" ry="1.3" fill="#6e4a26" opacity="0.35"/><ellipse cx="114.6" cy="304.2" rx="1.6" ry="1.6" fill="#6e4a26" opacity="0.35"/><ellipse cx="407.1" cy="263.1" rx="2.1" ry="1.8" fill="#6e4a26" opacity="0.35"/><ellipse cx="292.9" cy="274.2" rx="1.6" ry="1.4" fill="#6e4a26" opacity="0.35"/><ellipse cx="174.0" cy="296.3" rx="1.9" ry="1.4" fill="#6e4a26" opacity="0.35"/><ellipse cx="307.2" cy="302.7" rx="2.0" ry="1.4" fill="#6e4a26" opacity="0.35"/><ellipse cx="274.3" cy="310.1" rx="1.8" ry="2.0" fill="#6e4a26" opacity="0.35"/><ellipse cx="337.4" cy="274.2" rx="2.5" ry="1.3" fill="#6e4a26" opacity="0.35"/><ellipse cx="33.5" cy="299.1" rx="2.1" ry="1.5" fill="#6e4a26" opacity="0.35"/><ellipse cx="235.4" cy="308.6" rx="2.6" ry="1.0" fill="#6e4a26" opacity="0.35"/><ellipse cx="281.0" cy="280.1" rx="2.2" ry="1.8" fill="#6e4a26" opacity="0.35"/><ellipse cx="196.7" cy="280.8" rx="2.8" ry="1.4" fill="#6e4a26" opacity="0.35"/><ellipse cx="232.9" cy="283.3" rx="2.7" ry="1.7" fill="#6e4a26" opacity="0.35"/><ellipse cx="351.0" cy="276.1" rx="1.6" ry="1.7" fill="#6e4a26" opacity="0.35"/><ellipse cx="262.5" cy="300.0" rx="2.7" ry="1.1" fill="#6e4a26" opacity="0.35"/><ellipse cx="104.6" cy="255.0" rx="2.7" ry="1.1" fill="#6e4a26" opacity="0.35"/><ellipse cx="41.8" cy="299.0" rx="2.3" ry="1.1" fill="#6e4a26" opacity="0.35"/><ellipse cx="322.8" cy="296.2" rx="2.2" ry="1.1" fill="#6e4a26" opacity="0.35"/><ellipse cx="327.5" cy="277.2" rx="2.4" ry="2.0" fill="#6e4a26" opacity="0.35"/><ellipse cx="387.2" cy="306.7" rx="1.7" ry="1.3" fill="#6e4a26" opacity="0.35"/><ellipse cx="245.6" cy="250.4" rx="3.0" ry="1.3" fill="#6e4a26" opacity="0.35"/><ellipse cx="124.4" cy="270.3" rx="1.9" ry="1.9" fill="#6e4a26" opacity="0.35"/><ellipse cx="263.4" cy="283.2" rx="2.1" ry="1.1" fill="#6e4a26" opacity="0.35"/><ellipse cx="144.3" cy="306.3" rx="2.7" ry="1.9" fill="#6e4a26" opacity="0.35"/><ellipse cx="121.9" cy="263.1" rx="1.6" ry="1.5" fill="#6e4a26" opacity="0.35"/><ellipse cx="177.2" cy="280.2" rx="2.2" ry="1.6" fill="#6e4a26" opacity="0.35"/><ellipse cx="173.4" cy="302.1" rx="1.8" ry="1.9" fill="#6e4a26" opacity="0.35"/><ellipse cx="263.6" cy="253.3" rx="2.0" ry="1.5" fill="#6e4a26" opacity="0.35"/><ellipse cx="193.8" cy="286.7" rx="2.0" ry="1.3" fill="#6e4a26" opacity="0.35"/></g><g filter="url(#db1)"><path d="M70 212C68 228 70 244 74 256C77 264 80 274 82 286L86 286C85 272 84 262 84 250C84 238 86 226 88 214z" fill="#5e3a1c"/><path d="M202 212C205 232 206 252 204 270L202 290L207 290C210 272 212 250 215 228L216 210z" fill="#8a6238"/><path d="M72 200C78 214 82 226 82 240C82 256 84 270 86 284L88 296L94 296C93 282 93 268 94 254C96 238 104 224 118 210z" fill="#9a6a38"/><path d="M84 262C85 274 86 286 88 296L94 296C93 284 93 272 94 262z" fill="#cdbb98"/><path d="M184 212C188 236 189 256 189 276L189 300L196 300L197 276C198 256 202 236 210 212z" fill="#b08a5c"/><path d="M189 262L189 300L196 300L196.5 262z" fill="#d4c4a4"/><path d="M66 178C66 164 76 155 98 151C120 150 150 153 180 155C200 156 214 157 224 156C232 154 236 148 240 146L252 152C258 160 258 170 252 180C244 192 234 204 224 212C212 220 198 222 184 222C165 221 140 217 122 216C108 215 96 216 86 216C72 212 66 196 66 178z" fill="#7c4218"/><path d="M66 176C68 162 78 154 98 150C130 149 170 153 224 156L222 160C170 158 130 155 100 155C82 158 72 166 69 178z" fill="#3e1f0b"/><path d="M226 160C236 154 244 150 250 156C258 166 254 180 246 190C238 200 230 206 222 212C222 195 224 178 226 160z" fill="#8a5a2c"/><path d="M252 166C250 182 240 198 226 210L222 204C234 194 244 180 246 168z" fill="#3a1f0c"/><path d="M122 214C142 216 165 218 186 220" stroke="#efe4d2" stroke-width="1.8" fill="none"/><path d="M64 174C59 184 60 198 65 208L69 206C67 194 67 184 68 176z" fill="#4a2810"/><path d="M238 148C234 140 236 130 240 124C246 118 256 118 262 124C266 132 264 142 260 150C258 158 260 166 254 172C248 174 242 168 240 160z" fill="#9e7c54"/><path d="M242 156C246 158 252 158 256 156L258 172C254 176 246 176 242 170z" fill="#efe7dc"/><path d="M244 134C246 130 256 130 258 134L256 146L246 146z" fill="#5a4028"/><ellipse cx="250" cy="148" rx="4.5" ry="3.5" fill="#2e2418"/><ellipse cx="243" cy="133" rx="2.2" ry="1.8" fill="#1e1710"/><ellipse cx="258" cy="133" rx="2.2" ry="1.8" fill="#1e1710"/><path d="M239 126C230 124 224 118 226 113C232 111 240 117 243 122z" fill="#6a4a2c"/><path d="M262 125C272 124 279 117 277 112C271 110 263 116 260 121z" fill="#6a4a2c"/><path d="M240 118C230 108 220 94 215 78C212 64 212 48 214 37" stroke="#b89878" stroke-width="3.2" fill="none" stroke-linecap="round"/><path d="M221 95C224 86 225 78 224 69" stroke="#b89878" stroke-width="2.4" fill="none" stroke-linecap="round"/><path d="M258 118C270 110 284 100 293 86C300 74 303 62 303 50" stroke="#b89878" stroke-width="3.2" fill="none" stroke-linecap="round"/><path d="M282 100C285 92 286 84 285 76" stroke="#b89878" stroke-width="2.4" fill="none" stroke-linecap="round"/></g><ellipse cx="85.7" cy="156.1" rx="1.6" ry="1.1" fill="#f2ece0"/><ellipse cx="92.1" cy="156.3" rx="1.6" ry="1.1" fill="#f2ece0"/><ellipse cx="99.6" cy="154.7" rx="1.6" ry="1.1" fill="#f2ece0"/><ellipse cx="104.6" cy="157.0" rx="1.6" ry="1.1" fill="#f2ece0"/><ellipse cx="110.6" cy="155.2" rx="1.6" ry="1.1" fill="#f2ece0"/><ellipse cx="119.7" cy="155.9" rx="1.6" ry="1.1" fill="#f2ece0"/><ellipse cx="128.1" cy="155.9" rx="1.6" ry="1.1" fill="#f2ece0"/><ellipse cx="135.7" cy="155.0" rx="1.6" ry="1.1" fill="#f2ece0"/><ellipse cx="143.2" cy="157.1" rx="1.6" ry="1.1" fill="#f2ece0"/><ellipse cx="150.3" cy="156.7" rx="1.6" ry="1.1" fill="#f2ece0"/><ellipse cx="158.1" cy="154.7" rx="1.6" ry="1.1" fill="#f2ece0"/><ellipse cx="166.1" cy="156.3" rx="1.6" ry="1.1" fill="#f2ece0"/><ellipse cx="172.3" cy="154.6" rx="1.6" ry="1.1" fill="#f2ece0"/><ellipse cx="180.8" cy="155.9" rx="1.6" ry="1.1" fill="#f2ece0"/><ellipse cx="188.8" cy="157.1" rx="1.6" ry="1.1" fill="#f2ece0"/><ellipse cx="196.7" cy="157.3" rx="1.6" ry="1.1" fill="#f2ece0"/><ellipse cx="203.2" cy="156.9" rx="1.6" ry="1.1" fill="#f2ece0"/><ellipse cx="210.0" cy="157.3" rx="1.6" ry="1.1" fill="#f2ece0"/><ellipse cx="218.6" cy="154.8" rx="1.6" ry="1.1" fill="#f2ece0"/><ellipse cx="80.0" cy="163.4" rx="1.6" ry="1.1" fill="#f2ece0"/><ellipse cx="88.6" cy="162.4" rx="1.6" ry="1.1" fill="#f2ece0"/><ellipse cx="96.5" cy="162.0" rx="1.6" ry="1.1" fill="#f2ece0"/><ellipse cx="104.9" cy="161.6" rx="1.6" ry="1.1" fill="#f2ece0"/><ellipse cx="114.4" cy="162.3" rx="1.6" ry="1.1" fill="#f2ece0"/><ellipse cx="125.6" cy="162.5" rx="1.6" ry="1.1" fill="#f2ece0"/><ellipse cx="136.9" cy="163.1" rx="1.6" ry="1.1" fill="#f2ece0"/><ellipse cx="148.5" cy="162.5" rx="1.6" ry="1.1" fill="#f2ece0"/><ellipse cx="155.7" cy="163.1" rx="1.6" ry="1.1" fill="#f2ece0"/><ellipse cx="167.2" cy="163.2" rx="1.6" ry="1.1" fill="#f2ece0"/><ellipse cx="176.6" cy="162.6" rx="1.6" ry="1.1" fill="#f2ece0"/><ellipse cx="184.0" cy="163.0" rx="1.6" ry="1.1" fill="#f2ece0"/><ellipse cx="193.4" cy="161.4" rx="1.6" ry="1.1" fill="#f2ece0"/><ellipse cx="200.1" cy="163.1" rx="1.6" ry="1.1" fill="#f2ece0"/><ellipse cx="211.7" cy="160.8" rx="1.6" ry="1.1" fill="#f2ece0"/><ellipse cx="222.3" cy="161.7" rx="1.6" ry="1.1" fill="#f2ece0"/><ellipse cx="76.6" cy="170.8" rx="1.6" ry="1.1" fill="#f2ece0"/><ellipse cx="87.7" cy="168.6" rx="1.6" ry="1.1" fill="#f2ece0"/><ellipse cx="97.3" cy="168.6" rx="1.6" ry="1.1" fill="#f2ece0"/><ellipse cx="107.5" cy="169.5" rx="1.6" ry="1.1" fill="#f2ece0"/><ellipse cx="118.5" cy="171.4" rx="1.6" ry="1.1" fill="#f2ece0"/><ellipse cx="127.5" cy="171.5" rx="1.6" ry="1.1" fill="#f2ece0"/><ellipse cx="135.5" cy="168.7" rx="1.6" ry="1.1" fill="#f2ece0"/><ellipse cx="145.1" cy="168.6" rx="1.6" ry="1.1" fill="#f2ece0"/><ellipse cx="152.4" cy="169.7" rx="1.6" ry="1.1" fill="#f2ece0"/><ellipse cx="162.0" cy="169.0" rx="1.6" ry="1.1" fill="#f2ece0"/><ellipse cx="168.5" cy="171.1" rx="1.6" ry="1.1" fill="#f2ece0"/><ellipse cx="176.5" cy="171.4" rx="1.6" ry="1.1" fill="#f2ece0"/><ellipse cx="187.7" cy="169.6" rx="1.6" ry="1.1" fill="#f2ece0"/><ellipse cx="196.5" cy="170.1" rx="1.6" ry="1.1" fill="#f2ece0"/><ellipse cx="206.2" cy="170.3" rx="1.6" ry="1.1" fill="#f2ece0"/><ellipse cx="215.6" cy="170.4" rx="1.6" ry="1.1" fill="#f2ece0"/><ellipse cx="78.6" cy="177.8" rx="1.6" ry="1.1" fill="#f2ece0"/><ellipse cx="88.8" cy="177.2" rx="1.6" ry="1.1" fill="#f2ece0"/><ellipse cx="96.7" cy="179.4" rx="1.6" ry="1.1" fill="#f2ece0"/><ellipse cx="105.8" cy="178.1" rx="1.6" ry="1.1" fill="#f2ece0"/><ellipse cx="112.2" cy="177.7" rx="1.6" ry="1.1" fill="#f2ece0"/><ellipse cx="121.6" cy="176.6" rx="1.6" ry="1.1" fill="#f2ece0"/><ellipse cx="131.2" cy="178.4" rx="1.6" ry="1.1" fill="#f2ece0"/><ellipse cx="137.8" cy="178.4" rx="1.6" ry="1.1" fill="#f2ece0"/><ellipse cx="146.7" cy="178.5" rx="1.6" ry="1.1" fill="#f2ece0"/><ellipse cx="154.9" cy="178.6" rx="1.6" ry="1.1" fill="#f2ece0"/><ellipse cx="165.1" cy="176.6" rx="1.6" ry="1.1" fill="#f2ece0"/><ellipse cx="171.8" cy="178.5" rx="1.6" ry="1.1" fill="#f2ece0"/><ellipse cx="183.3" cy="177.3" rx="1.6" ry="1.1" fill="#f2ece0"/><ellipse cx="192.0" cy="178.3" rx="1.6" ry="1.1" fill="#f2ece0"/><ellipse cx="200.1" cy="177.6" rx="1.6" ry="1.1" fill="#f2ece0"/><ellipse cx="208.1" cy="177.6" rx="1.6" ry="1.1" fill="#f2ece0"/><ellipse cx="79.0" cy="185.6" rx="1.6" ry="1.1" fill="#f2ece0"/><ellipse cx="90.6" cy="184.6" rx="1.6" ry="1.1" fill="#f2ece0"/><ellipse cx="101.1" cy="186.7" rx="1.6" ry="1.1" fill="#f2ece0"/><ellipse cx="109.9" cy="185.2" rx="1.6" ry="1.1" fill="#f2ece0"/><ellipse cx="121.7" cy="185.2" rx="1.6" ry="1.1" fill="#f2ece0"/><ellipse cx="129.9" cy="185.8" rx="1.6" ry="1.1" fill="#f2ece0"/><ellipse cx="141.0" cy="184.8" rx="1.6" ry="1.1" fill="#f2ece0"/><ellipse cx="150.0" cy="185.5" rx="1.6" ry="1.1" fill="#f2ece0"/><ellipse cx="162.0" cy="185.8" rx="1.6" ry="1.1" fill="#f2ece0"/><ellipse cx="174.1" cy="185.0" rx="1.6" ry="1.1" fill="#f2ece0"/><ellipse cx="183.1" cy="186.5" rx="1.6" ry="1.1" fill="#f2ece0"/><ellipse cx="195.4" cy="185.9" rx="1.6" ry="1.1" fill="#f2ece0"/><ellipse cx="203.8" cy="184.9" rx="1.6" ry="1.1" fill="#f2ece0"/><ellipse cx="82.1" cy="194.9" rx="1.6" ry="1.1" fill="#f2ece0"/><ellipse cx="95.3" cy="193.1" rx="1.6" ry="1.1" fill="#f2ece0"/><ellipse cx="104.9" cy="194.9" rx="1.6" ry="1.1" fill="#f2ece0"/><ellipse cx="116.8" cy="194.9" rx="1.6" ry="1.1" fill="#f2ece0"/><ellipse cx="126.8" cy="192.9" rx="1.6" ry="1.1" fill="#f2ece0"/><ellipse cx="136.4" cy="194.9" rx="1.6" ry="1.1" fill="#f2ece0"/><ellipse cx="145.9" cy="193.5" rx="1.6" ry="1.1" fill="#f2ece0"/><ellipse cx="156.4" cy="193.8" rx="1.6" ry="1.1" fill="#f2ece0"/><ellipse cx="166.8" cy="195.3" rx="1.6" ry="1.1" fill="#f2ece0"/><ellipse cx="175.5" cy="192.5" rx="1.6" ry="1.1" fill="#f2ece0"/><ellipse cx="189.4" cy="195.1" rx="1.6" ry="1.1" fill="#f2ece0"/><ellipse cx="203.6" cy="193.8" rx="1.6" ry="1.1" fill="#f2ece0"/><ellipse cx="97.1" cy="201.2" rx="1.6" ry="1.1" fill="#f2ece0"/><ellipse cx="110.9" cy="203.0" rx="1.6" ry="1.1" fill="#f2ece0"/><ellipse cx="124.1" cy="202.1" rx="1.6" ry="1.1" fill="#f2ece0"/><ellipse cx="134.6" cy="201.5" rx="1.6" ry="1.1" fill="#f2ece0"/><ellipse cx="144.6" cy="200.7" rx="1.6" ry="1.1" fill="#f2ece0"/><ellipse cx="157.2" cy="201.4" rx="1.6" ry="1.1" fill="#f2ece0"/><ellipse cx="171.5" cy="200.6" rx="1.6" ry="1.1" fill="#f2ece0"/><ellipse cx="186.4" cy="202.6" rx="1.6" ry="1.1" fill="#f2ece0"/><ellipse cx="106.8" cy="210.2" rx="1.6" ry="1.1" fill="#f2ece0"/><ellipse cx="119.3" cy="207.5" rx="1.6" ry="1.1" fill="#f2ece0"/><ellipse cx="133.1" cy="208.0" rx="1.6" ry="1.1" fill="#f2ece0"/><ellipse cx="143.6" cy="209.5" rx="1.6" ry="1.1" fill="#f2ece0"/><ellipse cx="155.8" cy="208.7" rx="1.6" ry="1.1" fill="#f2ece0"/><ellipse cx="171.0" cy="209.3" rx="1.6" ry="1.1" fill="#f2ece0"/></g></svg>
<svg class="a" style="left:0;top:0" width="1919" height="892"><rect x="859.5" y="434.5" width="473" height="314" fill="none" stroke="#6a6a6a" stroke-width="1"/><path d="M1096 404.5V427.5" stroke="#6a6a6a" stroke-width="1.2"/><circle cx="859.5" cy="434" r="5.8" fill="#fff" stroke="#636363" stroke-width="2.1"/><circle cx="859.5" cy="591" r="5.8" fill="#fff" stroke="#636363" stroke-width="2.1"/><circle cx="859.5" cy="748" r="5.8" fill="#fff" stroke="#636363" stroke-width="2.1"/><circle cx="1096" cy="434" r="5.8" fill="#fff" stroke="#636363" stroke-width="2.1"/><circle cx="1096" cy="748" r="5.8" fill="#fff" stroke="#636363" stroke-width="2.1"/><circle cx="1332" cy="434" r="5.8" fill="#fff" stroke="#636363" stroke-width="2.1"/><circle cx="1332" cy="591" r="5.8" fill="#fff" stroke="#636363" stroke-width="2.1"/><circle cx="1332" cy="748" r="5.8" fill="#fff" stroke="#636363" stroke-width="2.1"/><path d="M1103.8 399.4A10.1 10.1 0 1 1 1106.8 391.4" fill="none" stroke="#6a6a6a" stroke-width="5.8"/><path d="M1103.8 399.4A10.1 10.1 0 1 1 1106.8 391.4" fill="none" stroke="#fff" stroke-width="2.4"/><path d="M1096 391.5H1115.5L1106 400.5z" fill="#fff" stroke="#6a6a6a" stroke-width="1.6"/></svg>
<div class="a" style="left:44px;top:220px;width:198px;height:112px;background:#fff;border:1px solid #c8c8c8"></div>
<div class="a" style="left:41px;top:354px;width:204px;height:117px;border:3px solid #c0462a;background:#fff"></div>
<div class="a" style="left:44px;top:494px;width:198px;height:112px;background:#fff;border:1px solid #c8c8c8"></div>
<div class="a" style="left:44px;top:631px;width:198px;height:112px;background:#fff;border:1px solid #c8c8c8"></div>
<div class="a" style="left:44px;top:768px;width:198px;height:112px;background:#fff;border:1px solid #c8c8c8"></div>
<div class="a t" style="left:-130.50px;top:218px;width:300px;text-align:center;font-size:17px;color:#505050;">1</div>
<div class="a t" style="left:-130.20px;top:356px;width:300px;text-align:center;font-size:17px;color:#c43e1c;">2</div>
<div class="a t" style="left:-130.00px;top:492px;width:300px;text-align:center;font-size:17px;color:#505050;">3</div>
<div class="a t" style="left:-130.30px;top:630px;width:300px;text-align:center;font-size:17px;color:#505050;">4</div>
<div class="a t" style="left:-130.30px;top:766px;width:300px;text-align:center;font-size:17px;color:#505050;">5</div>
<svg class="a" style="left:11px;top:237.7px" width="16" height="14" viewBox="0 0 16 14"><path d="M9 0.8L10.6 5H14.8L11.4 7.6L12.7 12L9 9.3L5.3 12L6.6 7.6L3.2 5H7.4z" fill="#555"/><path d="M1 5.5H3M0.5 8H2.5" stroke="#777" stroke-width=".8"/></svg>
<svg class="a" style="left:11px;top:374.7px" width="16" height="14" viewBox="0 0 16 14"><path d="M9 0.8L10.6 5H14.8L11.4 7.6L12.7 12L9 9.3L5.3 12L6.6 7.6L3.2 5H7.4z" fill="#555"/><path d="M1 5.5H3M0.5 8H2.5" stroke="#777" stroke-width=".8"/></svg>
<svg class="a" style="left:190px;top:229px" width="26.00" height="5.20" viewBox="0 0 200 40"><rect x="0" y="0" width="31.5" height="22.6" rx="1.2" fill="#111"/><rect x="4.1" y="11.4" width="6.8" height="7.6" fill="#fff"/><rect x="13" y="7.3" width="6.3" height="11.7" fill="#fff"/><rect x="21.6" y="4.2" width="6" height="14.8" fill="#fff"/><path d="M10.5 22.5L8 32M15.75 22.5V32M21 22.5L23.5 32" stroke="#111" stroke-width="2"/><text x="42.7" y="24.3" font-family="Liberation Sans" font-weight="bold" font-size="24.6" letter-spacing="-0.4" fill="#111">MagicSlides</text></svg>
<svg class="a" style="left:190px;top:366px" width="26.00" height="5.20" viewBox="0 0 200 40"><rect x="0" y="0" width="31.5" height="22.6" rx="1.2" fill="#111"/><rect x="4.1" y="11.4" width="6.8" height="7.6" fill="#fff"/><rect x="13" y="7.3" width="6.3" height="11.7" fill="#fff"/><rect x="21.6" y="4.2" width="6" height="14.8" fill="#fff"/><path d="M10.5 22.5L8 32M15.75 22.5V32M21 22.5L23.5 32" stroke="#111" stroke-width="2"/><text x="42.7" y="24.3" font-family="Liberation Sans" font-weight="bold" font-size="24.6" letter-spacing="-0.4" fill="#111">MagicSlides</text></svg>
<svg class="a" style="left:190px;top:503px" width="26.00" height="5.20" viewBox="0 0 200 40"><rect x="0" y="0" width="31.5" height="22.6" rx="1.2" fill="#111"/><rect x="4.1" y="11.4" width="6.8" height="7.6" fill="#fff"/><rect x="13" y="7.3" width="6.3" height="11.7" fill="#fff"/><rect x="21.6" y="4.2" width="6" height="14.8" fill="#fff"/><path d="M10.5 22.5L8 32M15.75 22.5V32M21 22.5L23.5 32" stroke="#111" stroke-width="2"/><text x="42.7" y="24.3" font-family="Liberation Sans" font-weight="bold" font-size="24.6" letter-spacing="-0.4" fill="#111">MagicSlides</text></svg>
<svg class="a" style="left:190px;top:640px" width="26.00" height="5.20" viewBox="0 0 200 40"><rect x="0" y="0" width="31.5" height="22.6" rx="1.2" fill="#111"/><rect x="4.1" y="11.4" width="6.8" height="7.6" fill="#fff"/><rect x="13" y="7.3" width="6.3" height="11.7" fill="#fff"/><rect x="21.6" y="4.2" width="6" height="14.8" fill="#fff"/><path d="M10.5 22.5L8 32M15.75 22.5V32M21 22.5L23.5 32" stroke="#111" stroke-width="2"/><text x="42.7" y="24.3" font-family="Liberation Sans" font-weight="bold" font-size="24.6" letter-spacing="-0.4" fill="#111">MagicSlides</text></svg>
<svg class="a" style="left:190px;top:777px" width="26.00" height="5.20" viewBox="0 0 200 40"><rect x="0" y="0" width="31.5" height="22.6" rx="1.2" fill="#111"/><rect x="4.1" y="11.4" width="6.8" height="7.6" fill="#fff"/><rect x="13" y="7.3" width="6.3" height="11.7" fill="#fff"/><rect x="21.6" y="4.2" width="6" height="14.8" fill="#fff"/><path d="M10.5 22.5L8 32M15.75 22.5V32M21 22.5L23.5 32" stroke="#111" stroke-width="2"/><text x="42.7" y="24.3" font-family="Liberation Sans" font-weight="bold" font-size="24.6" letter-spacing="-0.4" fill="#111">MagicSlides</text></svg>
<div class="a t" style="left:89.4px;top:263.8px;font-size:8.6px;font-weight:bold;color:#111;-webkit-text-stroke:0.35px #000;transform:scaleX(0.565);transform-origin:0 0">Professional Presentations in Seconds with AI</div>
<div class="a t" style="left:71px;top:279.2px;font-size:4.9px;color:#333;">Never start from a blank slide again.</div>
<div class="a t" style="left:71px;top:287.5px;font-size:4.9px;color:#333;">• Create presentation from text, YouTube, pdf</div>
<div class="a t" style="left:71px;top:292.8px;font-size:4.9px;color:#333;">• No Credit Card Required</div>
<div class="a t" style="left:71px;top:298.6px;font-size:4.9px;color:#333;">• No need to learn new tool</div>
<div class="a t" style="left:89.4px;top:541.8px;font-size:8.6px;font-weight:bold;color:#111;-webkit-text-stroke:0.35px #000;transform:scaleX(0.565);transform-origin:0 0">Professional Presentations in Seconds with AI</div>
<div class="a t" style="left:71px;top:552px;font-size:4.5px;color:#444;">Never start from a blank slide again.</div>
<div class="a t" style="left:71px;top:557.8px;font-size:4.5px;color:#444;">• Create presentation from text, YouTube, pdf</div>
<div class="a t" style="left:71px;top:561.8px;font-size:4.5px;color:#444;">• No Credit Card Required</div>
<div class="a t" style="left:71px;top:565.8px;font-size:4.5px;color:#444;">• No need to learn new tool</div>
<div class="a t" style="left:71px;top:569.8px;font-size:4.5px;color:#444;">It is the second one line of bullet.</div>
<div class="a t" style="left:78px;top:573.2px;font-size:4.4px;color:#444;">•This is the sub bullet here.</div>
<div class="a t" style="left:78px;top:577.2px;font-size:4.4px;color:#444;">•Example second line of bullet.</div>
<div class="a t" style="left:89.4px;top:679.4px;font-size:8.6px;font-weight:bold;color:#111;-webkit-text-stroke:0.35px #000;transform:scaleX(0.565);transform-origin:0 0">Professional Presentations in Seconds with AI</div>
<div class="a t" style="left:71px;top:690.2px;font-size:4.9px;color:#333;">Never start from a blank slide again.</div>
<div class="a t" style="left:71px;top:698.5px;font-size:4.9px;color:#333;">• Create presentation from text, YouTube, pdf</div>
<div class="a t" style="left:71px;top:703.8px;font-size:4.9px;color:#333;">• No Credit Card Required</div>
<div class="a t" style="left:71px;top:709.6px;font-size:4.9px;color:#333;">• No need to learn <span style="color:#1f5fb8;text-decoration:underline">new tool</span></div>
<svg class="a" style="left:109px;top:391px" width="68" height="45" viewBox="0 0 474 315" preserveAspectRatio="none"><defs>
<linearGradient id="t2bg" x1="0" y1="0" x2="0" y2="1">
<stop offset="0" stop-color="#8e8a4a"/><stop offset="0.2" stop-color="#9a9150"/><stop offset="0.33" stop-color="#ae9858"/>
<stop offset="0.5" stop-color="#c09c5c"/><stop offset="0.7" stop-color="#ba955a"/><stop offset="1" stop-color="#ad8750"/></linearGradient>
<filter id="t2b8" x="-50%" y="-50%" width="200%" height="200%"><feGaussianBlur stdDeviation="9"/></filter>
<filter id="t2b4" x="-50%" y="-50%" width="200%" height="200%"><feGaussianBlur stdDeviation="4"/></filter>
<filter id="t2b1" x="-20%" y="-20%" width="140%" height="140%"><feGaussianBlur stdDeviation="0.8"/></filter>
<clipPath id="t2clip"><rect x="0" y="0" width="474" height="315"/></clipPath>
</defs><g clip-path="url(#t2clip)"><rect x="0" y="0" width="474" height="315" fill="url(#t2bg)"/><g filter="url(#t2b8)"><ellipse cx="80" cy="30" rx="120" ry="35" fill="#8a8846"/><ellipse cx="190" cy="55" rx="60" ry="30" fill="#8e8c4a"/><ellipse cx="320" cy="30" rx="85" ry="45" fill="#95784e"/><ellipse cx="445" cy="55" rx="40" ry="65" fill="#7a8a48"/><ellipse cx="420" cy="20" rx="30" ry="25" fill="#62773a"/><ellipse cx="345" cy="85" rx="25" ry="12" fill="#7b8a44"/><ellipse cx="280" cy="62" rx="22" ry="14" fill="#7d8a44"/><ellipse cx="160" cy="55" rx="25" ry="12" fill="#7e8944"/><ellipse cx="430" cy="130" rx="50" ry="25" fill="#a99656"/><ellipse cx="70" cy="130" rx="80" ry="30" fill="#ad9659"/><ellipse cx="330" cy="160" rx="120" ry="25" fill="#bd9f60"/><ellipse cx="90" cy="300" rx="110" ry="25" fill="#a6824a"/><ellipse cx="380" cy="270" rx="90" ry="30" fill="#ad8b4f"/><ellipse cx="320" cy="215" rx="60" ry="22" fill="#ab8c50"/></g><g filter="url(#t2b4)"><ellipse cx="122" cy="80" rx="11" ry="13" fill="#ad8c5e"/><ellipse cx="400" cy="108" rx="12" ry="10" fill="#86a050"/><ellipse cx="440" cy="30" rx="22" ry="25" fill="#6c7e3c"/><ellipse cx="260" cy="90" rx="20" ry="10" fill="#889448"/></g><g filter="url(#t2b1)"><path d="M70 212C68 228 70 244 74 256C77 264 80 274 82 286L86 286C85 272 84 262 84 250C84 238 86 226 88 214z" fill="#5e3a1c"/><path d="M202 212C205 232 206 252 204 270L202 290L207 290C210 272 212 250 215 228L216 210z" fill="#8a6238"/><path d="M72 200C78 214 82 226 82 240C82 256 84 270 86 284L88 296L94 296C93 282 93 268 94 254C96 238 104 224 118 210z" fill="#9a6a38"/><path d="M84 262C85 274 86 286 88 296L94 296C93 284 93 272 94 262z" fill="#cdbb98"/><path d="M184 212C188 236 189 256 189 276L189 300L196 300L197 276C198 256 202 236 210 212z" fill="#b08a5c"/><path d="M189 262L189 300L196 300L196.5 262z" fill="#d4c4a4"/><path d="M66 178C66 164 76 155 98 151C120 150 150 153 180 155C200 156 214 157 224 156C232 154 236 148 240 146L252 152C258 160 258 170 252 180C244 192 234 204 224 212C212 220 198 222 184 222C165 221 140 217 122 216C108 215 96 216 86 216C72 212 66 196 66 178z" fill="#7c4218"/><path d="M66 176C68 162 78 154 98 150C130 149 170 153 224 156L222 160C170 158 130 155 100 155C82 158 72 166 69 178z" fill="#3e1f0b"/><path d="M226 160C236 154 244 150 250 156C258 166 254 180 246 190C238 200 230 206 222 212C222 195 224 178 226 160z" fill="#8a5a2c"/><path d="M252 166C250 182 240 198 226 210L222 204C234 194 244 180 246 168z" fill="#3a1f0c"/><path d="M122 214C142 216 165 218 186 220" stroke="#efe4d2" stroke-width="1.8" fill="none"/><path d="M64 174C59 184 60 198 65 208L69 206C67 194 67 184 68 176z" fill="#4a2810"/><path d="M238 148C234 140 236 130 240 124C246 118 256 118 262 124C266 132 264 142 260 150C258 158 260 166 254 172C248 174 242 168 240 160z" fill="#9e7c54"/><path d="M242 156C246 158 252 158 256 156L258 172C254 176 246 176 242 170z" fill="#efe7dc"/><path d="M244 134C246 130 256 130 258 134L256 146L246 146z" fill="#5a4028"/><ellipse cx="250" cy="148" rx="4.5" ry="3.5" fill="#2e2418"/><ellipse cx="243" cy="133" rx="2.2" ry="1.8" fill="#1e1710"/><ellipse cx="258" cy="133" rx="2.2" ry="1.8" fill="#1e1710"/><path d="M239 126C230 124 224 118 226 113C232 111 240 117 243 122z" fill="#6a4a2c"/><path d="M262 125C272 124 279 117 277 112C271 110 263 116 260 121z" fill="#6a4a2c"/><path d="M240 118C230 108 220 94 215 78C212 64 212 48 214 37" stroke="#b89878" stroke-width="3.2" fill="none" stroke-linecap="round"/><path d="M221 95C224 86 225 78 224 69" stroke="#b89878" stroke-width="2.4" fill="none" stroke-linecap="round"/><path d="M258 118C270 110 284 100 293 86C300 74 303 62 303 50" stroke="#b89878" stroke-width="3.2" fill="none" stroke-linecap="round"/><path d="M282 100C285 92 286 84 285 76" stroke="#b89878" stroke-width="2.4" fill="none" stroke-linecap="round"/></g><ellipse cx="85.7" cy="156.1" rx="1.6" ry="1.1" fill="#f2ece0"/><ellipse cx="92.1" cy="156.3" rx="1.6" ry="1.1" fill="#f2ece0"/><ellipse cx="99.6" cy="154.7" rx="1.6" ry="1.1" fill="#f2ece0"/><ellipse cx="104.6" cy="157.0" rx="1.6" ry="1.1" fill="#f2ece0"/><ellipse cx="110.6" cy="155.2" rx="1.6" ry="1.1" fill="#f2ece0"/><ellipse cx="119.7" cy="155.9" rx="1.6" ry="1.1" fill="#f2ece0"/><ellipse cx="128.1" cy="155.9" rx="1.6" ry="1.1" fill="#f2ece0"/><ellipse cx="135.7" cy="155.0" rx="1.6" ry="1.1" fill="#f2ece0"/><ellipse cx="143.2" cy="157.1" rx="1.6" ry="1.1" fill="#f2ece0"/><ellipse cx="150.3" cy="156.7" rx="1.6" ry="1.1" fill="#f2ece0"/><ellipse cx="158.1" cy="154.7" rx="1.6" ry="1.1" fill="#f2ece0"/><ellipse cx="166.1" cy="156.3" rx="1.6" ry="1.1" fill="#f2ece0"/><ellipse cx="172.3" cy="154.6" rx="1.6" ry="1.1" fill="#f2ece0"/><ellipse cx="180.8" cy="155.9" rx="1.6" ry="1.1" fill="#f2ece0"/><ellipse cx="188.8" cy="157.1" rx="1.6" ry="1.1" fill="#f2ece0"/><ellipse cx="196.7" cy="157.3" rx="1.6" ry="1.1" fill="#f2ece0"/><ellipse cx="203.2" cy="156.9" rx="1.6" ry="1.1" fill="#f2ece0"/><ellipse cx="210.0" cy="157.3" rx="1.6" ry="1.1" fill="#f2ece0"/><ellipse cx="218.6" cy="154.8" rx="1.6" ry="1.1" fill="#f2ece0"/><ellipse cx="80.0" cy="163.4" rx="1.6" ry="1.1" fill="#f2ece0"/><ellipse cx="88.6" cy="162.4" rx="1.6" ry="1.1" fill="#f2ece0"/><ellipse cx="96.5" cy="162.0" rx="1.6" ry="1.1" fill="#f2ece0"/><ellipse cx="104.9" cy="161.6" rx="1.6" ry="1.1" fill="#f2ece0"/><ellipse cx="114.4" cy="162.3" rx="1.6" ry="1.1" fill="#f2ece0"/><ellipse cx="125.6" cy="162.5" rx="1.6" ry="1.1" fill="#f2ece0"/><ellipse cx="136.9" cy="163.1" rx="1.6" ry="1.1" fill="#f2ece0"/><ellipse cx="148.5" cy="162.5" rx="1.6" ry="1.1" fill="#f2ece0"/><ellipse cx="155.7" cy="163.1" rx="1.6" ry="1.1" fill="#f2ece0"/><ellipse cx="167.2" cy="163.2" rx="1.6" ry="1.1" fill="#f2ece0"/><ellipse cx="176.6" cy="162.6" rx="1.6" ry="1.1" fill="#f2ece0"/><ellipse cx="184.0" cy="163.0" rx="1.6" ry="1.1" fill="#f2ece0"/><ellipse cx="193.4" cy="161.4" rx="1.6" ry="1.1" fill="#f2ece0"/><ellipse cx="200.1" cy="163.1" rx="1.6" ry="1.1" fill="#f2ece0"/><ellipse cx="211.7" cy="160.8" rx="1.6" ry="1.1" fill="#f2ece0"/><ellipse cx="222.3" cy="161.7" rx="1.6" ry="1.1" fill="#f2ece0"/><ellipse cx="76.6" cy="170.8" rx="1.6" ry="1.1" fill="#f2ece0"/><ellipse cx="87.7" cy="168.6" rx="1.6" ry="1.1" fill="#f2ece0"/><ellipse cx="97.3" cy="168.6" rx="1.6" ry="1.1" fill="#f2ece0"/><ellipse cx="107.5" cy="169.5" rx="1.6" ry="1.1" fill="#f2ece0"/><ellipse cx="118.5" cy="171.4" rx="1.6" ry="1.1" fill="#f2ece0"/><ellipse cx="127.5" cy="171.5" rx="1.6" ry="1.1" fill="#f2ece0"/><ellipse cx="135.5" cy="168.7" rx="1.6" ry="1.1" fill="#f2ece0"/><ellipse cx="145.1" cy="168.6" rx="1.6" ry="1.1" fill="#f2ece0"/><ellipse cx="152.4" cy="169.7" rx="1.6" ry="1.1" fill="#f2ece0"/><ellipse cx="162.0" cy="169.0" rx="1.6" ry="1.1" fill="#f2ece0"/><ellipse cx="168.5" cy="171.1" rx="1.6" ry="1.1" fill="#f2ece0"/><ellipse cx="176.5" cy="171.4" rx="1.6" ry="1.1" fill="#f2ece0"/><ellipse cx="187.7" cy="169.6" rx="1.6" ry="1.1" fill="#f2ece0"/><ellipse cx="196.5" cy="170.1" rx="1.6" ry="1.1" fill="#f2ece0"/><ellipse cx="206.2" cy="170.3" rx="1.6" ry="1.1" fill="#f2ece0"/><ellipse cx="215.6" cy="170.4" rx="1.6" ry="1.1" fill="#f2ece0"/><ellipse cx="78.6" cy="177.8" rx="1.6" ry="1.1" fill="#f2ece0"/><ellipse cx="88.8" cy="177.2" rx="1.6" ry="1.1" fill="#f2ece0"/><ellipse cx="96.7" cy="179.4" rx="1.6" ry="1.1" fill="#f2ece0"/><ellipse cx="105.8" cy="178.1" rx="1.6" ry="1.1" fill="#f2ece0"/><ellipse cx="112.2" cy="177.7" rx="1.6" ry="1.1" fill="#f2ece0"/><ellipse cx="121.6" cy="176.6" rx="1.6" ry="1.1" fill="#f2ece0"/><ellipse cx="131.2" cy="178.4" rx="1.6" ry="1.1" fill="#f2ece0"/><ellipse cx="137.8" cy="178.4" rx="1.6" ry="1.1" fill="#f2ece0"/><ellipse cx="146.7" cy="178.5" rx="1.6" ry="1.1" fill="#f2ece0"/><ellipse cx="154.9" cy="178.6" rx="1.6" ry="1.1" fill="#f2ece0"/><ellipse cx="165.1" cy="176.6" rx="1.6" ry="1.1" fill="#f2ece0"/><ellipse cx="171.8" cy="178.5" rx="1.6" ry="1.1" fill="#f2ece0"/><ellipse cx="183.3" cy="177.3" rx="1.6" ry="1.1" fill="#f2ece0"/><ellipse cx="192.0" cy="178.3" rx="1.6" ry="1.1" fill="#f2ece0"/><ellipse cx="200.1" cy="177.6" rx="1.6" ry="1.1" fill="#f2ece0"/><ellipse cx="208.1" cy="177.6" rx="1.6" ry="1.1" fill="#f2ece0"/><ellipse cx="79.0" cy="185.6" rx="1.6" ry="1.1" fill="#f2ece0"/><ellipse cx="90.6" cy="184.6" rx="1.6" ry="1.1" fill="#f2ece0"/><ellipse cx="101.1" cy="186.7" rx="1.6" ry="1.1" fill="#f2ece0"/><ellipse cx="109.9" cy="185.2" rx="1.6" ry="1.1" fill="#f2ece0"/><ellipse cx="121.7" cy="185.2" rx="1.6" ry="1.1" fill="#f2ece0"/><ellipse cx="129.9" cy="185.8" rx="1.6" ry="1.1" fill="#f2ece0"/><ellipse cx="141.0" cy="184.8" rx="1.6" ry="1.1" fill="#f2ece0"/><ellipse cx="150.0" cy="185.5" rx="1.6" ry="1.1" fill="#f2ece0"/><ellipse cx="162.0" cy="185.8" rx="1.6" ry="1.1" fill="#f2ece0"/><ellipse cx="174.1" cy="185.0" rx="1.6" ry="1.1" fill="#f2ece0"/><ellipse cx="183.1" cy="186.5" rx="1.6" ry="1.1" fill="#f2ece0"/><ellipse cx="195.4" cy="185.9" rx="1.6" ry="1.1" fill="#f2ece0"/><ellipse cx="203.8" cy="184.9" rx="1.6" ry="1.1" fill="#f2ece0"/><ellipse cx="82.1" cy="194.9" rx="1.6" ry="1.1" fill="#f2ece0"/><ellipse cx="95.3" cy="193.1" rx="1.6" ry="1.1" fill="#f2ece0"/><ellipse cx="104.9" cy="194.9" rx="1.6" ry="1.1" fill="#f2ece0"/><ellipse cx="116.8" cy="194.9" rx="1.6" ry="1.1" fill="#f2ece0"/><ellipse cx="126.8" cy="192.9" rx="1.6" ry="1.1" fill="#f2ece0"/><ellipse cx="136.4" cy="194.9" rx="1.6" ry="1.1" fill="#f2ece0"/><ellipse cx="145.9" cy="193.5" rx="1.6" ry="1.1" fill="#f2ece0"/><ellipse cx="156.4" cy="193.8" rx="1.6" ry="1.1" fill="#f2ece0"/><ellipse cx="166.8" cy="195.3" rx="1.6" ry="1.1" fill="#f2ece0"/><ellipse cx="175.5" cy="192.5" rx="1.6" ry="1.1" fill="#f2ece0"/><ellipse cx="189.4" cy="195.1" rx="1.6" ry="1.1" fill="#f2ece0"/><ellipse cx="203.6" cy="193.8" rx="1.6" ry="1.1" fill="#f2ece0"/><ellipse cx="97.1" cy="201.2" rx="1.6" ry="1.1" fill="#f2ece0"/><ellipse cx="110.9" cy="203.0" rx="1.6" ry="1.1" fill="#f2ece0"/><ellipse cx="124.1" cy="202.1" rx="1.6" ry="1.1" fill="#f2ece0"/><ellipse cx="134.6" cy="201.5" rx="1.6" ry="1.1" fill="#f2ece0"/><ellipse cx="144.6" cy="200.7" rx="1.6" ry="1.1" fill="#f2ece0"/><ellipse cx="157.2" cy="201.4" rx="1.6" ry="1.1" fill="#f2ece0"/><ellipse cx="171.5" cy="200.6" rx="1.6" ry="1.1" fill="#f2ece0"/><ellipse cx="186.4" cy="202.6" rx="1.6" ry="1.1" fill="#f2ece0"/><ellipse cx="106.8" cy="210.2" rx="1.6" ry="1.1" fill="#f2ece0"/><ellipse cx="119.3" cy="207.5" rx="1.6" ry="1.1" fill="#f2ece0"/><ellipse cx="133.1" cy="208.0" rx="1.6" ry="1.1" fill="#f2ece0"/><ellipse cx="143.6" cy="209.5" rx="1.6" ry="1.1" fill="#f2ece0"/><ellipse cx="155.8" cy="208.7" rx="1.6" ry="1.1" fill="#f2ece0"/><ellipse cx="171.0" cy="209.3" rx="1.6" ry="1.1" fill="#f2ece0"/></g></svg>
<svg class="a" style="left:105px;top:803px;filter:grayscale(1) contrast(1.2) brightness(1.35)" width="73" height="49" viewBox="0 0 474 315" preserveAspectRatio="none"><defs>
<linearGradient id="g5bg" x1="0" y1="0" x2="0" y2="1">
<stop offset="0" stop-color="#8e8a4a"/><stop offset="0.2" stop-color="#9a9150"/><stop offset="0.33" stop-color="#ae9858"/>
<stop offset="0.5" stop-color="#c09c5c"/><stop offset="0.7" stop-color="#ba955a"/><stop offset="1" stop-color="#ad8750"/></linearGradient>
<filter id="g5b8" x="-50%" y="-50%" width="200%" height="200%"><feGaussianBlur stdDeviation="9"/></filter>
<filter id="g5b4" x="-50%" y="-50%" width="200%" height="200%"><feGaussianBlur stdDeviation="4"/></filter>
<filter id="g5b1" x="-20%" y="-20%" width="140%" height="140%"><feGaussianBlur stdDeviation="0.8"/></filter>
<clipPath id="g5clip"><rect x="0" y="0" width="474" height="315"/></clipPath>
</defs><g clip-path="url(#g5clip)"><rect x="0" y="0" width="474" height="315" fill="url(#g5bg)"/><g filter="url(#g5b8)"><ellipse cx="80" cy="30" rx="120" ry="35" fill="#8a8846"/><ellipse cx="190" cy="55" rx="60" ry="30" fill="#8e8c4a"/><ellipse cx="320" cy="30" rx="85" ry="45" fill="#95784e"/><ellipse cx="445" cy="55" rx="40" ry="65" fill="#7a8a48"/><ellipse cx="420" cy="20" rx="30" ry="25" fill="#62773a"/><ellipse cx="345" cy="85" rx="25" ry="12" fill="#7b8a44"/><ellipse cx="280" cy="62" rx="22" ry="14" fill="#7d8a44"/><ellipse cx="160" cy="55" rx="25" ry="12" fill="#7e8944"/><ellipse cx="430" cy="130" rx="50" ry="25" fill="#a99656"/><ellipse cx="70" cy="130" rx="80" ry="30" fill="#ad9659"/><ellipse cx="330" cy="160" rx="120" ry="25" fill="#bd9f60"/><ellipse cx="90" cy="300" rx="110" ry="25" fill="#a6824a"/><ellipse cx="380" cy="270" rx="90" ry="30" fill="#ad8b4f"/><ellipse cx="320" cy="215" rx="60" ry="22" fill="#ab8c50"/></g><g filter="url(#g5b4)"><ellipse cx="122" cy="80" rx="11" ry="13" fill="#ad8c5e"/><ellipse cx="400" cy="108" rx="12" ry="10" fill="#86a050"/><ellipse cx="440" cy="30" rx="22" ry="25" fill="#6c7e3c"/><ellipse cx="260" cy="90" rx="20" ry="10" fill="#889448"/></g><g filter="url(#g5b1)"><path d="M70 212C68 228 70 244 74 256C77 264 80 274 82 286L86 286C85 272 84 262 84 250C84 238 86 226 88 214z" fill="#5e3a1c"/><path d="M202 212C205 232 206 252 204 270L202 290L207 290C210 272 212 250 215 228L216 210z" fill="#8a6238"/><path d="M72 200C78 214 82 226 82 240C82 256 84 270 86 284L88 296L94 296C93 282 93 268 94 254C96 238 104 224 118 210z" fill="#9a6a38"/><path d="M84 262C85 274 86 286 88 296L94 296C93 284 93 272 94 262z" fill="#cdbb98"/><path d="M184 212C188 236 189 256 189 276L189 300L196 300L197 276C198 256 202 236 210 212z" fill="#b08a5c"/><path d="M189 262L189 300L196 300L196.5 262z" fill="#d4c4a4"/><path d="M66 178C66 164 76 155 98 151C120 150 150 153 180 155C200 156 214 157 224 156C232 154 236 148 240 146L252 152C258 160 258 170 252 180C244 192 234 204 224 212C212 220 198 222 184 222C165 221 140 217 122 216C108 215 96 216 86 216C72 212 66 196 66 178z" fill="#7c4218"/><path d="M66 176C68 162 78 154 98 150C130 149 170 153 224 156L222 160C170 158 130 155 100 155C82 158 72 166 69 178z" fill="#3e1f0b"/><path d="M226 160C236 154 244 150 250 156C258 166 254 180 246 190C238 200 230 206 222 212C222 195 224 178 226 160z" fill="#8a5a2c"/><path d="M252 166C250 182 240 198 226 210L222 204C234 194 244 180 246 168z" fill="#3a1f0c"/><path d="M122 214C142 216 165 218 186 220" stroke="#efe4d2" stroke-width="1.8" fill="none"/><path d="M64 174C59 184 60 198 65 208L69 206C67 194 67 184 68 176z" fill="#4a2810"/><path d="M238 148C234 140 236 130 240 124C246 118 256 118 262 124C266 132 264 142 260 150C258 158 260 166 254 172C248 174 242 168 240 160z" fill="#9e7c54"/><path d="M242 156C246 158 252 158 256 156L258 172C254 176 246 176 242 170z" fill="#efe7dc"/><path d="M244 134C246 130 256 130 258 134L256 146L246 146z" fill="#5a4028"/><ellipse cx="250" cy="148" rx="4.5" ry="3.5" fill="#2e2418"/><ellipse cx="243" cy="133" rx="2.2" ry="1.8" fill="#1e1710"/><ellipse cx="258" cy="133" rx="2.2" ry="1.8" fill="#1e1710"/><path d="M239 126C230 124 224 118 226 113C232 111 240 117 243 122z" fill="#6a4a2c"/><path d="M262 125C272 124 279 117 277 112C271 110 263 116 260 121z" fill="#6a4a2c"/><path d="M240 118C230 108 220 94 215 78C212 64 212 48 214 37" stroke="#b89878" stroke-width="3.2" fill="none" stroke-linecap="round"/><path d="M221 95C224 86 225 78 224 69" stroke="#b89878" stroke-width="2.4" fill="none" stroke-linecap="round"/><path d="M258 118C270 110 284 100 293 86C300 74 303 62 303 50" stroke="#b89878" stroke-width="3.2" fill="none" stroke-linecap="round"/><path d="M282 100C285 92 286 84 285 76" stroke="#b89878" stroke-width="2.4" fill="none" stroke-linecap="round"/></g><ellipse cx="85.7" cy="156.1" rx="1.6" ry="1.1" fill="#f2ece0"/><ellipse cx="92.1" cy="156.3" rx="1.6" ry="1.1" fill="#f2ece0"/><ellipse cx="99.6" cy="154.7" rx="1.6" ry="1.1" fill="#f2ece0"/><ellipse cx="104.6" cy="157.0" rx="1.6" ry="1.1" fill="#f2ece0"/><ellipse cx="110.6" cy="155.2" rx="1.6" ry="1.1" fill="#f2ece0"/><ellipse cx="119.7" cy="155.9" rx="1.6" ry="1.1" fill="#f2ece0"/><ellipse cx="128.1" cy="155.9" rx="1.6" ry="1.1" fill="#f2ece0"/><ellipse cx="135.7" cy="155.0" rx="1.6" ry="1.1" fill="#f2ece0"/><ellipse cx="143.2" cy="157.1" rx="1.6" ry="1.1" fill="#f2ece0"/><ellipse cx="150.3" cy="156.7" rx="1.6" ry="1.1" fill="#f2ece0"/><ellipse cx="158.1" cy="154.7" rx="1.6" ry="1.1" fill="#f2ece0"/><ellipse cx="166.1" cy="156.3" rx="1.6" ry="1.1" fill="#f2ece0"/><ellipse cx="172.3" cy="154.6" rx="1.6" ry="1.1" fill="#f2ece0"/><ellipse cx="180.8" cy="155.9" rx="1.6" ry="1.1" fill="#f2ece0"/><ellipse cx="188.8" cy="157.1" rx="1.6" ry="1.1" fill="#f2ece0"/><ellipse cx="196.7" cy="157.3" rx="1.6" ry="1.1" fill="#f2ece0"/><ellipse cx="203.2" cy="156.9" rx="1.6" ry="1.1" fill="#f2ece0"/><ellipse cx="210.0" cy="157.3" rx="1.6" ry="1.1" fill="#f2ece0"/><ellipse cx="218.6" cy="154.8" rx="1.6" ry="1.1" fill="#f2ece0"/><ellipse cx="80.0" cy="163.4" rx="1.6" ry="1.1" fill="#f2ece0"/><ellipse cx="88.6" cy="162.4" rx="1.6" ry="1.1" fill="#f2ece0"/><ellipse cx="96.5" cy="162.0" rx="1.6" ry="1.1" fill="#f2ece0"/><ellipse cx="104.9" cy="161.6" rx="1.6" ry="1.1" fill="#f2ece0"/><ellipse cx="114.4" cy="162.3" rx="1.6" ry="1.1" fill="#f2ece0"/><ellipse cx="125.6" cy="162.5" rx="1.6" ry="1.1" fill="#f2ece0"/><ellipse cx="136.9" cy="163.1" rx="1.6" ry="1.1" fill="#f2ece0"/><ellipse cx="148.5" cy="162.5" rx="1.6" ry="1.1" fill="#f2ece0"/><ellipse cx="155.7" cy="163.1" rx="1.6" ry="1.1" fill="#f2ece0"/><ellipse cx="167.2" cy="163.2" rx="1.6" ry="1.1" fill="#f2ece0"/><ellipse cx="176.6" cy="162.6" rx="1.6" ry="1.1" fill="#f2ece0"/><ellipse cx="184.0" cy="163.0" rx="1.6" ry="1.1" fill="#f2ece0"/><ellipse cx="193.4" cy="161.4" rx="1.6" ry="1.1" fill="#f2ece0"/><ellipse cx="200.1" cy="163.1" rx="1.6" ry="1.1" fill="#f2ece0"/><ellipse cx="211.7" cy="160.8" rx="1.6" ry="1.1" fill="#f2ece0"/><ellipse cx="222.3" cy="161.7" rx="1.6" ry="1.1" fill="#f2ece0"/><ellipse cx="76.6" cy="170.8" rx="1.6" ry="1.1" fill="#f2ece0"/><ellipse cx="87.7" cy="168.6" rx="1.6" ry="1.1" fill="#f2ece0"/><ellipse cx="97.3" cy="168.6" rx="1.6" ry="1.1" fill="#f2ece0"/><ellipse cx="107.5" cy="169.5" rx="1.6" ry="1.1" fill="#f2ece0"/><ellipse cx="118.5" cy="171.4" rx="1.6" ry="1.1" fill="#f2ece0"/><ellipse cx="127.5" cy="171.5" rx="1.6" ry="1.1" fill="#f2ece0"/><ellipse cx="135.5" cy="168.7" rx="1.6" ry="1.1" fill="#f2ece0"/><ellipse cx="145.1" cy="168.6" rx="1.6" ry="1.1" fill="#f2ece0"/><ellipse cx="152.4" cy="169.7" rx="1.6" ry="1.1" fill="#f2ece0"/><ellipse cx="162.0" cy="169.0" rx="1.6" ry="1.1" fill="#f2ece0"/><ellipse cx="168.5" cy="171.1" rx="1.6" ry="1.1" fill="#f2ece0"/><ellipse cx="176.5" cy="171.4" rx="1.6" ry="1.1" fill="#f2ece0"/><ellipse cx="187.7" cy="169.6" rx="1.6" ry="1.1" fill="#f2ece0"/><ellipse cx="196.5" cy="170.1" rx="1.6" ry="1.1" fill="#f2ece0"/><ellipse cx="206.2" cy="170.3" rx="1.6" ry="1.1" fill="#f2ece0"/><ellipse cx="215.6" cy="170.4" rx="1.6" ry="1.1" fill="#f2ece0"/><ellipse cx="78.6" cy="177.8" rx="1.6" ry="1.1" fill="#f2ece0"/><ellipse cx="88.8" cy="177.2" rx="1.6" ry="1.1" fill="#f2ece0"/><ellipse cx="96.7" cy="179.4" rx="1.6" ry="1.1" fill="#f2ece0"/><ellipse cx="105.8" cy="178.1" rx="1.6" ry="1.1" fill="#f2ece0"/><ellipse cx="112.2" cy="177.7" rx="1.6" ry="1.1" fill="#f2ece0"/><ellipse cx="121.6" cy="176.6" rx="1.6" ry="1.1" fill="#f2ece0"/><ellipse cx="131.2" cy="178.4" rx="1.6" ry="1.1" fill="#f2ece0"/><ellipse cx="137.8" cy="178.4" rx="1.6" ry="1.1" fill="#f2ece0"/><ellipse cx="146.7" cy="178.5" rx="1.6" ry="1.1" fill="#f2ece0"/><ellipse cx="154.9" cy="178.6" rx="1.6" ry="1.1" fill="#f2ece0"/><ellipse cx="165.1" cy="176.6" rx="1.6" ry="1.1" fill="#f2ece0"/><ellipse cx="171.8" cy="178.5" rx="1.6" ry="1.1" fill="#f2ece0"/><ellipse cx="183.3" cy="177.3" rx="1.6" ry="1.1" fill="#f2ece0"/><ellipse cx="192.0" cy="178.3" rx="1.6" ry="1.1" fill="#f2ece0"/><ellipse cx="200.1" cy="177.6" rx="1.6" ry="1.1" fill="#f2ece0"/><ellipse cx="208.1" cy="177.6" rx="1.6" ry="1.1" fill="#f2ece0"/><ellipse cx="79.0" cy="185.6" rx="1.6" ry="1.1" fill="#f2ece0"/><ellipse cx="90.6" cy="184.6" rx="1.6" ry="1.1" fill="#f2ece0"/><ellipse cx="101.1" cy="186.7" rx="1.6" ry="1.1" fill="#f2ece0"/><ellipse cx="109.9" cy="185.2" rx="1.6" ry="1.1" fill="#f2ece0"/><ellipse cx="121.7" cy="185.2" rx="1.6" ry="1.1" fill="#f2ece0"/><ellipse cx="129.9" cy="185.8" rx="1.6" ry="1.1" fill="#f2ece0"/><ellipse cx="141.0" cy="184.8" rx="1.6" ry="1.1" fill="#f2ece0"/><ellipse cx="150.0" cy="185.5" rx="1.6" ry="1.1" fill="#f2ece0"/><ellipse cx="162.0" cy="185.8" rx="1.6" ry="1.1" fill="#f2ece0"/><ellipse cx="174.1" cy="185.0" rx="1.6" ry="1.1" fill="#f2ece0"/><ellipse cx="183.1" cy="186.5" rx="1.6" ry="1.1" fill="#f2ece0"/><ellipse cx="195.4" cy="185.9" rx="1.6" ry="1.1" fill="#f2ece0"/><ellipse cx="203.8" cy="184.9" rx="1.6" ry="1.1" fill="#f2ece0"/><ellipse cx="82.1" cy="194.9" rx="1.6" ry="1.1" fill="#f2ece0"/><ellipse cx="95.3" cy="193.1" rx="1.6" ry="1.1" fill="#f2ece0"/><ellipse cx="104.9" cy="194.9" rx="1.6" ry="1.1" fill="#f2ece0"/><ellipse cx="116.8" cy="194.9" rx="1.6" ry="1.1" fill="#f2ece0"/><ellipse cx="126.8" cy="192.9" rx="1.6" ry="1.1" fill="#f2ece0"/><ellipse cx="136.4" cy="194.9" rx="1.6" ry="1.1" fill="#f2ece0"/><ellipse cx="145.9" cy="193.5" rx="1.6" ry="1.1" fill="#f2ece0"/><ellipse cx="156.4" cy="193.8" rx="1.6" ry="1.1" fill="#f2ece0"/><ellipse cx="166.8" cy="195.3" rx="1.6" ry="1.1" fill="#f2ece0"/><ellipse cx="175.5" cy="192.5" rx="1.6" ry="1.1" fill="#f2ece0"/><ellipse cx="189.4" cy="195.1" rx="1.6" ry="1.1" fill="#f2ece0"/><ellipse cx="203.6" cy="193.8" rx="1.6" ry="1.1" fill="#f2ece0"/><ellipse cx="97.1" cy="201.2" rx="1.6" ry="1.1" fill="#f2ece0"/><ellipse cx="110.9" cy="203.0" rx="1.6" ry="1.1" fill="#f2ece0"/><ellipse cx="124.1" cy="202.1" rx="1.6" ry="1.1" fill="#f2ece0"/><ellipse cx="134.6" cy="201.5" rx="1.6" ry="1.1" fill="#f2ece0"/><ellipse cx="144.6" cy="200.7" rx="1.6" ry="1.1" fill="#f2ece0"/><ellipse cx="157.2" cy="201.4" rx="1.6" ry="1.1" fill="#f2ece0"/><ellipse cx="171.5" cy="200.6" rx="1.6" ry="1.1" fill="#f2ece0"/><ellipse cx="186.4" cy="202.6" rx="1.6" ry="1.1" fill="#f2ece0"/><ellipse cx="106.8" cy="210.2" rx="1.6" ry="1.1" fill="#f2ece0"/><ellipse cx="119.3" cy="207.5" rx="1.6" ry="1.1" fill="#f2ece0"/><ellipse cx="133.1" cy="208.0" rx="1.6" ry="1.1" fill="#f2ece0"/><ellipse cx="143.6" cy="209.5" rx="1.6" ry="1.1" fill="#f2ece0"/><ellipse cx="155.8" cy="208.7" rx="1.6" ry="1.1" fill="#f2ece0"/><ellipse cx="171.0" cy="209.3" rx="1.6" ry="1.1" fill="#f2ece0"/></g></svg>
<svg class="a" style="left:131px;top:807.5px" width="25" height="22.3" viewBox="169 30 163 146" preserveAspectRatio="none"><defs>
<linearGradient id="c5bg" x1="0" y1="0" x2="0" y2="1">
<stop offset="0" stop-color="#8e8a4a"/><stop offset="0.2" stop-color="#9a9150"/><stop offset="0.33" stop-color="#ae9858"/>
<stop offset="0.5" stop-color="#c09c5c"/><stop offset="0.7" stop-color="#ba955a"/><stop offset="1" stop-color="#ad8750"/></linearGradient>
<filter id="c5b8" x="-50%" y="-50%" width="200%" height="200%"><feGaussianBlur stdDeviation="9"/></filter>
<filter id="c5b4" x="-50%" y="-50%" width="200%" height="200%"><feGaussianBlur stdDeviation="4"/></filter>
<filter id="c5b1" x="-20%" y="-20%" width="140%" height="140%"><feGaussianBlur stdDeviation="0.8"/></filter>
<clipPath id="c5clip"><rect x="0" y="0" width="474" height="315"/></clipPath>
</defs><g clip-path="url(#c5clip)"><rect x="0" y="0" width="474" height="315" fill="url(#c5bg)"/><g filter="url(#c5b8)"><ellipse cx="80" cy="30" rx="120" ry="35" fill="#8a8846"/><ellipse cx="190" cy="55" rx="60" ry="30" fill="#8e8c4a"/><ellipse cx="320" cy="30" rx="85" ry="45" fill="#95784e"/><ellipse cx="445" cy="55" rx="40" ry="65" fill="#7a8a48"/><ellipse cx="420" cy="20" rx="30" ry="25" fill="#62773a"/><ellipse cx="345" cy="85" rx="25" ry="12" fill="#7b8a44"/><ellipse cx="280" cy="62" rx="22" ry="14" fill="#7d8a44"/><ellipse cx="160" cy="55" rx="25" ry="12" fill="#7e8944"/><ellipse cx="430" cy="130" rx="50" ry="25" fill="#a99656"/><ellipse cx="70" cy="130" rx="80" ry="30" fill="#ad9659"/><ellipse cx="330" cy="160" rx="120" ry="25" fill="#bd9f60"/><ellipse cx="90" cy="300" rx="110" ry="25" fill="#a6824a"/><ellipse cx="380" cy="270" rx="90" ry="30" fill="#ad8b4f"/><ellipse cx="320" cy="215" rx="60" ry="22" fill="#ab8c50"/></g><g filter="url(#c5b4)"><ellipse cx="122" cy="80" rx="11" ry="13" fill="#ad8c5e"/><ellipse cx="400" cy="108" rx="12" ry="10" fill="#86a050"/><ellipse cx="440" cy="30" rx="22" ry="25" fill="#6c7e3c"/><ellipse cx="260" cy="90" rx="20" ry="10" fill="#889448"/></g><g filter="url(#c5b1)"><path d="M70 212C68 228 70 244 74 256C77 264 80 274 82 286L86 286C85 272 84 262 84 250C84 238 86 226 88 214z" fill="#5e3a1c"/><path d="M202 212C205 232 206 252 204 270L202 290L207 290C210 272 212 250 215 228L216 210z" fill="#8a6238"/><path d="M72 200C78 214 82 226 82 240C82 256 84 270 86 284L88 296L94 296C93 282 93 268 94 254C96 238 104 224 118 210z" fill="#9a6a38"/><path d="M84 262C85 274 86 286 88 296L94 296C93 284 93 272 94 262z" fill="#cdbb98"/><path d="M184 212C188 236 189 256 189 276L189 300L196 300L197 276C198 256 202 236 210 212z" fill="#b08a5c"/><path d="M189 262L189 300L196 300L196.5 262z" fill="#d4c4a4"/><path d="M66 178C66 164 76 155 98 151C120 150 150 153 180 155C200 156 214 157 224 156C232 154 236 148 240 146L252 152C258 160 258 170 252 180C244 192 234 204 224 212C212 220 198 222 184 222C165 221 140 217 122 216C108 215 96 216 86 216C72 212 66 196 66 178z" fill="#7c4218"/><path d="M66 176C68 162 78 154 98 150C130 149 170 153 224 156L222 160C170 158 130 155 100 155C82 158 72 166 69 178z" fill="#3e1f0b"/><path d="M226 160C236 154 244 150 250 156C258 166 254 180 246 190C238 200 230 206 222 212C222 195 224 178 226 160z" fill="#8a5a2c"/><path d="M252 166C250 182 240 198 226 210L222 204C234 194 244 180 246 168z" fill="#3a1f0c"/><path d="M122 214C142 216 165 218 186 220" stroke="#efe4d2" stroke-width="1.8" fill="none"/><path d="M64 174C59 184 60 198 65 208L69 206C67 194 67 184 68 176z" fill="#4a2810"/><path d="M238 148C234 140 236 130 240 124C246 118 256 118 262 124C266 132 264 142 260 150C258 158 260 166 254 172C248 174 242 168 240 160z" fill="#9e7c54"/><path d="M242 156C246 158 252 158 256 156L258 172C254 176 246 176 242 170z" fill="#efe7dc"/><path d="M244 134C246 130 256 130 258 134L256 146L246 146z" fill="#5a4028"/><ellipse cx="250" cy="148" rx="4.5" ry="3.5" fill="#2e2418"/><ellipse cx="243" cy="133" rx="2.2" ry="1.8" fill="#1e1710"/><ellipse cx="258" cy="133" rx="2.2" ry="1.8" fill="#1e1710"/><path d="M239 126C230 124 224 118 226 113C232 111 240 117 243 122z" fill="#6a4a2c"/><path d="M262 125C272 124 279 117 277 112C271 110 263 116 260 121z" fill="#6a4a2c"/><path d="M240 118C230 108 220 94 215 78C212 64 212 48 214 37" stroke="#b89878" stroke-width="3.2" fill="none" stroke-linecap="round"/><path d="M221 95C224 86 225 78 224 69" stroke="#b89878" stroke-width="2.4" fill="none" stroke-linecap="round"/><path d="M258 118C270 110 284 100 293 86C300 74 303 62 303 50" stroke="#b89878" stroke-width="3.2" fill="none" stroke-linecap="round"/><path d="M282 100C285 92 286 84 285 76" stroke="#b89878" stroke-width="2.4" fill="none" stroke-linecap="round"/></g><ellipse cx="85.7" cy="156.1" rx="1.6" ry="1.1" fill="#f2ece0"/><ellipse cx="92.1" cy="156.3" rx="1.6" ry="1.1" fill="#f2ece0"/><ellipse cx="99.6" cy="154.7" rx="1.6" ry="1.1" fill="#f2ece0"/><ellipse cx="104.6" cy="157.0" rx="1.6" ry="1.1" fill="#f2ece0"/><ellipse cx="110.6" cy="155.2" rx="1.6" ry="1.1" fill="#f2ece0"/><ellipse cx="119.7" cy="155.9" rx="1.6" ry="1.1" fill="#f2ece0"/><ellipse cx="128.1" cy="155.9" rx="1.6" ry="1.1" fill="#f2ece0"/><ellipse cx="135.7" cy="155.0" rx="1.6" ry="1.1" fill="#f2ece0"/><ellipse cx="143.2" cy="157.1" rx="1.6" ry="1.1" fill="#f2ece0"/><ellipse cx="150.3" cy="156.7" rx="1.6" ry="1.1" fill="#f2ece0"/><ellipse cx="158.1" cy="154.7" rx="1.6" ry="1.1" fill="#f2ece0"/><ellipse cx="166.1" cy="156.3" rx="1.6" ry="1.1" fill="#f2ece0"/><ellipse cx="172.3" cy="154.6" rx="1.6" ry="1.1" fill="#f2ece0"/><ellipse cx="180.8" cy="155.9" rx="1.6" ry="1.1" fill="#f2ece0"/><ellipse cx="188.8" cy="157.1" rx="1.6" ry="1.1" fill="#f2ece0"/><ellipse cx="196.7" cy="157.3" rx="1.6" ry="1.1" fill="#f2ece0"/><ellipse cx="203.2" cy="156.9" rx="1.6" ry="1.1" fill="#f2ece0"/><ellipse cx="210.0" cy="157.3" rx="1.6" ry="1.1" fill="#f2ece0"/><ellipse cx="218.6" cy="154.8" rx="1.6" ry="1.1" fill="#f2ece0"/><ellipse cx="80.0" cy="163.4" rx="1.6" ry="1.1" fill="#f2ece0"/><ellipse cx="88.6" cy="162.4" rx="1.6" ry="1.1" fill="#f2ece0"/><ellipse cx="96.5" cy="162.0" rx="1.6" ry="1.1" fill="#f2ece0"/><ellipse cx="104.9" cy="161.6" rx="1.6" ry="1.1" fill="#f2ece0"/><ellipse cx="114.4" cy="162.3" rx="1.6" ry="1.1" fill="#f2ece0"/><ellipse cx="125.6" cy="162.5" rx="1.6" ry="1.1" fill="#f2ece0"/><ellipse cx="136.9" cy="163.1" rx="1.6" ry="1.1" fill="#f2ece0"/><ellipse cx="148.5" cy="162.5" rx="1.6" ry="1.1" fill="#f2ece0"/><ellipse cx="155.7" cy="163.1" rx="1.6" ry="1.1" fill="#f2ece0"/><ellipse cx="167.2" cy="163.2" rx="1.6" ry="1.1" fill="#f2ece0"/><ellipse cx="176.6" cy="162.6" rx="1.6" ry="1.1" fill="#f2ece0"/><ellipse cx="184.0" cy="163.0" rx="1.6" ry="1.1" fill="#f2ece0"/><ellipse cx="193.4" cy="161.4" rx="1.6" ry="1.1" fill="#f2ece0"/><ellipse cx="200.1" cy="163.1" rx="1.6" ry="1.1" fill="#f2ece0"/><ellipse cx="211.7" cy="160.8" rx="1.6" ry="1.1" fill="#f2ece0"/><ellipse cx="222.3" cy="161.7" rx="1.6" ry="1.1" fill="#f2ece0"/><ellipse cx="76.6" cy="170.8" rx="1.6" ry="1.1" fill="#f2ece0"/><ellipse cx="87.7" cy="168.6" rx="1.6" ry="1.1" fill="#f2ece0"/><ellipse cx="97.3" cy="168.6" rx="1.6" ry="1.1" fill="#f2ece0"/><ellipse cx="107.5" cy="169.5" rx="1.6" ry="1.1" fill="#f2ece0"/><ellipse cx="118.5" cy="171.4" rx="1.6" ry="1.1" fill="#f2ece0"/><ellipse cx="127.5" cy="171.5" rx="1.6" ry="1.1" fill="#f2ece0"/><ellipse cx="135.5" cy="168.7" rx="1.6" ry="1.1" fill="#f2ece0"/><ellipse cx="145.1" cy="168.6" rx="1.6" ry="1.1" fill="#f2ece0"/><ellipse cx="152.4" cy="169.7" rx="1.6" ry="1.1" fill="#f2ece0"/><ellipse cx="162.0" cy="169.0" rx="1.6" ry="1.1" fill="#f2ece0"/><ellipse cx="168.5" cy="171.1" rx="1.6" ry="1.1" fill="#f2ece0"/><ellipse cx="176.5" cy="171.4" rx="1.6" ry="1.1" fill="#f2ece0"/><ellipse cx="187.7" cy="169.6" rx="1.6" ry="1.1" fill="#f2ece0"/><ellipse cx="196.5" cy="170.1" rx="1.6" ry="1.1" fill="#f2ece0"/><ellipse cx="206.2" cy="170.3" rx="1.6" ry="1.1" fill="#f2ece0"/><ellipse cx="215.6" cy="170.4" rx="1.6" ry="1.1" fill="#f2ece0"/><ellipse cx="78.6" cy="177.8" rx="1.6" ry="1.1" fill="#f2ece0"/><ellipse cx="88.8" cy="177.2" rx="1.6" ry="1.1" fill="#f2ece0"/><ellipse cx="96.7" cy="179.4" rx="1.6" ry="1.1" fill="#f2ece0"/><ellipse cx="105.8" cy="178.1" rx="1.6" ry="1.1" fill="#f2ece0"/><ellipse cx="112.2" cy="177.7" rx="1.6" ry="1.1" fill="#f2ece0"/><ellipse cx="121.6" cy="176.6" rx="1.6" ry="1.1" fill="#f2ece0"/><ellipse cx="131.2" cy="178.4" rx="1.6" ry="1.1" fill="#f2ece0"/><ellipse cx="137.8" cy="178.4" rx="1.6" ry="1.1" fill="#f2ece0"/><ellipse cx="146.7" cy="178.5" rx="1.6" ry="1.1" fill="#f2ece0"/><ellipse cx="154.9" cy="178.6" rx="1.6" ry="1.1" fill="#f2ece0"/><ellipse cx="165.1" cy="176.6" rx="1.6" ry="1.1" fill="#f2ece0"/><ellipse cx="171.8" cy="178.5" rx="1.6" ry="1.1" fill="#f2ece0"/><ellipse cx="183.3" cy="177.3" rx="1.6" ry="1.1" fill="#f2ece0"/><ellipse cx="192.0" cy="178.3" rx="1.6" ry="1.1" fill="#f2ece0"/><ellipse cx="200.1" cy="177.6" rx="1.6" ry="1.1" fill="#f2ece0"/><ellipse cx="208.1" cy="177.6" rx="1.6" ry="1.1" fill="#f2ece0"/><ellipse cx="79.0" cy="185.6" rx="1.6" ry="1.1" fill="#f2ece0"/><ellipse cx="90.6" cy="184.6" rx="1.6" ry="1.1" fill="#f2ece0"/><ellipse cx="101.1" cy="186.7" rx="1.6" ry="1.1" fill="#f2ece0"/><ellipse cx="109.9" cy="185.2" rx="1.6" ry="1.1" fill="#f2ece0"/><ellipse cx="121.7" cy="185.2" rx="1.6" ry="1.1" fill="#f2ece0"/><ellipse cx="129.9" cy="185.8" rx="1.6" ry="1.1" fill="#f2ece0"/><ellipse cx="141.0" cy="184.8" rx="1.6" ry="1.1" fill="#f2ece0"/><ellipse cx="150.0" cy="185.5" rx="1.6" ry="1.1" fill="#f2ece0"/><ellipse cx="162.0" cy="185.8" rx="1.6" ry="1.1" fill="#f2ece0"/><ellipse cx="174.1" cy="185.0" rx="1.6" ry="1.1" fill="#f2ece0"/><ellipse cx="183.1" cy="186.5" rx="1.6" ry="1.1" fill="#f2ece0"/><ellipse cx="195.4" cy="185.9" rx="1.6" ry="1.1" fill="#f2ece0"/><ellipse cx="203.8" cy="184.9" rx="1.6" ry="1.1" fill="#f2ece0"/><ellipse cx="82.1" cy="194.9" rx="1.6" ry="1.1" fill="#f2ece0"/><ellipse cx="95.3" cy="193.1" rx="1.6" ry="1.1" fill="#f2ece0"/><ellipse cx="104.9" cy="194.9" rx="1.6" ry="1.1" fill="#f2ece0"/><ellipse cx="116.8" cy="194.9" rx="1.6" ry="1.1" fill="#f2ece0"/><ellipse cx="126.8" cy="192.9" rx="1.6" ry="1.1" fill="#f2ece0"/><ellipse cx="136.4" cy="194.9" rx="1.6" ry="1.1" fill="#f2ece0"/><ellipse cx="145.9" cy="193.5" rx="1.6" ry="1.1" fill="#f2ece0"/><ellipse cx="156.4" cy="193.8" rx="1.6" ry="1.1" fill="#f2ece0"/><ellipse cx="166.8" cy="195.3" rx="1.6" ry="1.1" fill="#f2ece0"/><ellipse cx="175.5" cy="192.5" rx="1.6" ry="1.1" fill="#f2ece0"/><ellipse cx="189.4" cy="195.1" rx="1.6" ry="1.1" fill="#f2ece0"/><ellipse cx="203.6" cy="193.8" rx="1.6" ry="1.1" fill="#f2ece0"/><ellipse cx="97.1" cy="201.2" rx="1.6" ry="1.1" fill="#f2ece0"/><ellipse cx="110.9" cy="203.0" rx="1.6" ry="1.1" fill="#f2ece0"/><ellipse cx="124.1" cy="202.1" rx="1.6" ry="1.1" fill="#f2ece0"/><ellipse cx="134.6" cy="201.5" rx="1.6" ry="1.1" fill="#f2ece0"/><ellipse cx="144.6" cy="200.7" rx="1.6" ry="1.1" fill="#f2ece0"/><ellipse cx="157.2" cy="201.4" rx="1.6" ry="1.1" fill="#f2ece0"/><ellipse cx="171.5" cy="200.6" rx="1.6" ry="1.1" fill="#f2ece0"/><ellipse cx="186.4" cy="202.6" rx="1.6" ry="1.1" fill="#f2ece0"/><ellipse cx="106.8" cy="210.2" rx="1.6" ry="1.1" fill="#f2ece0"/><ellipse cx="119.3" cy="207.5" rx="1.6" ry="1.1" fill="#f2ece0"/><ellipse cx="133.1" cy="208.0" rx="1.6" ry="1.1" fill="#f2ece0"/><ellipse cx="143.6" cy="209.5" rx="1.6" ry="1.1" fill="#f2ece0"/><ellipse cx="155.8" cy="208.7" rx="1.6" ry="1.1" fill="#f2ece0"/><ellipse cx="171.0" cy="209.3" rx="1.6" ry="1.1" fill="#f2ece0"/></g></svg>
</body></html>
